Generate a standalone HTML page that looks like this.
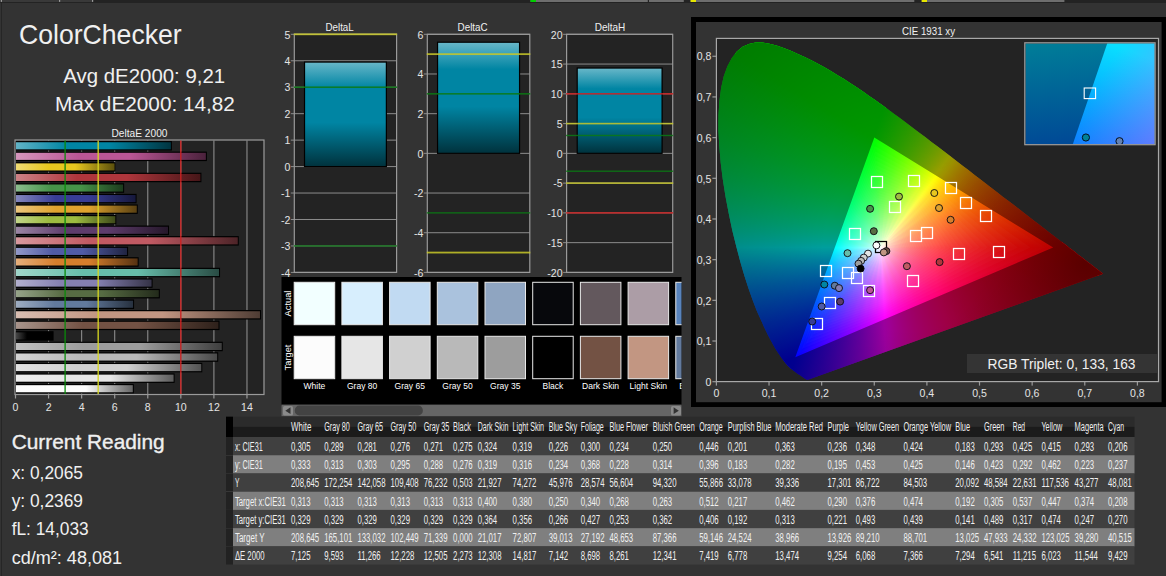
<!DOCTYPE html>
<html><head><meta charset="utf-8"><title>ColorChecker</title>
<style>
html,body{margin:0;padding:0;background:#333333;overflow:hidden}
#root{position:relative;width:1166px;height:576px;background:#333333;overflow:hidden;font-family:"Liberation Sans", sans-serif}
svg{position:absolute;left:0;top:0;font-family:"Liberation Sans", sans-serif}
#cie{position:absolute;left:717.0px;top:39.0px;width:441.0px;height:342.0px;clip-path:polygon(91.0px 340.7px,91.0px 340.7px,90.9px 340.7px,90.9px 340.7px,90.8px 340.7px,90.7px 340.7px,90.6px 340.7px,90.5px 340.8px,90.4px 340.8px,90.2px 340.7px,90.0px 340.7px,89.8px 340.7px,89.6px 340.6px,89.4px 340.5px,89.2px 340.5px,89.0px 340.3px,88.8px 340.2px,88.6px 340.1px,88.3px 339.9px,88.0px 339.7px,87.6px 339.5px,87.2px 339.2px,86.8px 338.9px,86.4px 338.6px,85.9px 338.3px,85.4px 337.9px,84.8px 337.5px,84.2px 337.1px,83.5px 336.6px,82.7px 336.1px,81.8px 335.5px,80.9px 334.9px,79.9px 334.2px,78.9px 333.5px,77.7px 332.6px,76.5px 331.7px,75.2px 330.6px,73.8px 329.4px,72.3px 328.1px,70.7px 326.5px,68.9px 324.4px,66.9px 322.1px,64.7px 319.2px,62.4px 315.8px,59.8px 312.0px,57.1px 307.4px,54.1px 302.0px,50.9px 295.9px,47.4px 288.7px,43.7px 280.6px,39.6px 271.4px,35.6px 261.1px,31.5px 249.4px,27.3px 236.6px,23.3px 222.7px,19.3px 207.6px,15.3px 191.4px,11.8px 174.8px,8.6px 157.9px,5.8px 140.6px,3.7px 123.7px,2.3px 107.3px,1.4px 91.3px,1.5px 76.3px,2.4px 62.3px,4.1px 49.1px,6.7px 37.5px,10.3px 27.5px,14.8px 19.0px,19.9px 12.4px,25.6px 7.8px,31.9px 5.0px,38.5px 3.5px,45.3px 3.5px,52.4px 4.7px,59.5px 6.6px,66.6px 8.9px,73.8px 11.8px,80.8px 14.9px,87.6px 18.0px,94.3px 21.3px,100.9px 24.7px,107.4px 28.3px,113.8px 32.0px,120.2px 35.9px,126.6px 39.8px,133.0px 43.9px,139.3px 48.1px,145.6px 52.3px,151.8px 56.7px,158.1px 61.1px,164.4px 65.5px,170.6px 70.1px,176.9px 74.7px,183.2px 79.3px,189.5px 84.0px,195.7px 88.7px,202.0px 93.4px,208.2px 98.1px,214.5px 102.9px,220.7px 107.6px,226.9px 112.3px,233.1px 117.0px,239.2px 121.8px,245.3px 126.4px,251.4px 131.1px,257.3px 135.7px,263.3px 140.3px,269.1px 144.8px,274.9px 149.2px,280.5px 153.6px,286.1px 157.9px,291.6px 162.0px,296.9px 166.1px,302.1px 170.1px,307.1px 174.0px,312.0px 177.8px,316.7px 181.4px,321.1px 184.8px,325.3px 188.1px,329.4px 191.2px,333.3px 194.2px,337.0px 197.0px,340.5px 199.8px,343.8px 202.3px,346.9px 204.6px,349.8px 206.8px,352.5px 208.9px,355.0px 210.8px,357.3px 212.6px,359.5px 214.3px,361.4px 215.9px,363.3px 217.3px,365.0px 218.6px,366.6px 219.8px,368.1px 220.9px,369.5px 222.0px,370.7px 223.0px,371.9px 223.9px,373.1px 224.8px,374.1px 225.6px,375.1px 226.4px,376.1px 227.1px,377.0px 227.8px,377.8px 228.4px,378.5px 229.0px,379.2px 229.5px,379.9px 230.0px,380.4px 230.4px,380.9px 230.8px,381.5px 231.2px,382.1px 231.7px,382.8px 232.3px,383.6px 232.9px,384.5px 233.6px,385.4px 234.3px,386.0px 234.8px)}
#cie div{position:absolute;left:0;top:0;width:100%;height:100%}
#eR{background:conic-gradient(from 0deg at 336.20px 208.46px,#00ff00 0deg,#00ff00 1.5deg,#00ff00 3deg,#00ff00 4.5deg,#00ff00 6deg,#00ff00 7.5deg,#00ff00 9deg,#00ff00 10.5deg,#00ff00 12deg,#00ff00 13.5deg,#00ff00 15deg,#00ff00 16.5deg,#00ff00 18deg,#00ff00 19.5deg,#00ff00 21deg,#00ff00 22.5deg,#00ff00 24deg,#00ff00 25.5deg,#00ff00 27deg,#00ff00 28.5deg,#00ff00 30deg,#00ff00 31.5deg,#00ff00 33deg,#00ff00 34.5deg,#00ff00 36deg,#00ff00 37.5deg,#00ff00 39deg,#00ff00 40.5deg,#00ff00 42deg,#00ff00 43.5deg,#00ff00 45deg,#00ff00 46.5deg,#00ff00 48deg,#00ff00 49.5deg,#00ff00 51deg,#00ff00 52.5deg,#00ff00 54deg,#00ff00 55.5deg,#00ff00 57deg,#00ff00 58.5deg,#00ff00 60deg,#00ff00 61.5deg,#00ff00 63deg,#00ff00 64.5deg,#00ff00 66deg,#000000 67.5deg,#000000 69deg,#000000 70.5deg,#000000 72deg,#000000 73.5deg,#000000 75deg,#000000 76.5deg,#000000 78deg,#000000 79.5deg,#000000 81deg,#000000 82.5deg,#000000 84deg,#000000 85.5deg,#000000 87deg,#000000 88.5deg,#000000 90deg,#000000 91.5deg,#000000 93deg,#000000 94.5deg,#000000 96deg,#000000 97.5deg,#000000 99deg,#000000 100.5deg,#000000 102deg,#000000 103.5deg,#000000 105deg,#000000 106.5deg,#000000 108deg,#000000 109.5deg,#000000 111deg,#000000 112.5deg,#000000 114deg,#000000 115.5deg,#000000 117deg,#000000 118.5deg,#000000 120deg,#000000 121.5deg,#0000ff 123deg,#0000ff 124.5deg,#0000ff 126deg,#0000ff 127.5deg,#0000ff 129deg,#0000ff 130.5deg,#0000ff 132deg,#0000ff 133.5deg,#0000ff 135deg,#0000ff 136.5deg,#0000ff 138deg,#0000ff 139.5deg,#0000ff 141deg,#0000ff 142.5deg,#0000ff 144deg,#0000ff 145.5deg,#0000ff 147deg,#0000ff 148.5deg,#0000ff 150deg,#0000ff 151.5deg,#0000ff 153deg,#0000ff 154.5deg,#0000ff 156deg,#0000ff 157.5deg,#0000ff 159deg,#0000ff 160.5deg,#0000ff 162deg,#0000ff 163.5deg,#0000ff 165deg,#0000ff 166.5deg,#0000ff 168deg,#0000ff 169.5deg,#0000ff 171deg,#0000ff 172.5deg,#0000ff 174deg,#0000ff 175.5deg,#0000ff 177deg,#0000ff 178.5deg,#0000ff 180deg,#0000ff 181.5deg,#0000ff 183deg,#0000ff 184.5deg,#0000ff 186deg,#0000ff 187.5deg,#0000ff 189deg,#0000ff 190.5deg,#0000ff 192deg,#0000ff 193.5deg,#0000ff 195deg,#0000ff 196.5deg,#0000ff 198deg,#0000ff 199.5deg,#0000ff 201deg,#0000ff 202.5deg,#0000ff 204deg,#0000ff 205.5deg,#0000ff 207deg,#0000ff 208.5deg,#0000ff 210deg,#0000ff 211.5deg,#0000ff 213deg,#0000ff 214.5deg,#0000ff 216deg,#0000ff 217.5deg,#0000ff 219deg,#0000ff 220.5deg,#0000ff 222deg,#0000ff 223.5deg,#0000ff 225deg,#0000ff 226.5deg,#0000ff 228deg,#0000ff 229.5deg,#0000ff 231deg,#0000ff 232.5deg,#0000ff 234deg,#0000ff 235.5deg,#0000ff 237deg,#0000ff 238.5deg,#0000ff 240deg,#0000ff 241.5deg,#0000ff 243deg,#0000ff 244.5deg,#0000ff 246deg,#0004ff 247.5deg,#0010ff 249deg,#001cff 250.5deg,#0028ff 252deg,#0035ff 253.5deg,#0042ff 255deg,#0051ff 256.5deg,#0060ff 258deg,#0070ff 259.5deg,#0081ff 261deg,#0092ff 262.5deg,#00a6ff 264deg,#00baff 265.5deg,#00d0ff 267deg,#00e8ff 268.5deg,#00fffd 270deg,#00ffe4 271.5deg,#00ffce 273deg,#00ffba 274.5deg,#00ffa8 276deg,#00ff98 277.5deg,#00ff89 279deg,#00ff7b 280.5deg,#00ff6e 282deg,#00ff62 283.5deg,#00ff57 285deg,#00ff4d 286.5deg,#00ff43 288deg,#00ff3a 289.5deg,#00ff32 291deg,#00ff2a 292.5deg,#00ff22 294deg,#00ff1b 295.5deg,#00ff14 297deg,#00ff0d 298.5deg,#00ff06 300deg,#00ff00 301.5deg,#00ff00 303deg,#00ff00 304.5deg,#00ff00 306deg,#00ff00 307.5deg,#00ff00 309deg,#00ff00 310.5deg,#00ff00 312deg,#00ff00 313.5deg,#00ff00 315deg,#00ff00 316.5deg,#00ff00 318deg,#00ff00 319.5deg,#00ff00 321deg,#00ff00 322.5deg,#00ff00 324deg,#00ff00 325.5deg,#00ff00 327deg,#00ff00 328.5deg,#00ff00 330deg,#00ff00 331.5deg,#00ff00 333deg,#00ff00 334.5deg,#00ff00 336deg,#00ff00 337.5deg,#00ff00 339deg,#00ff00 340.5deg,#00ff00 342deg,#00ff00 343.5deg,#00ff00 345deg,#00ff00 346.5deg,#00ff00 348deg,#00ff00 349.5deg,#00ff00 351deg,#00ff00 352.5deg,#00ff00 354deg,#00ff00 355.5deg,#00ff00 357deg,#00ff00 358.5deg,#00ff00 360deg);clip-path:polygon(463.0px -747.8px,-224.6px 1165.8px,-1071.6px 861.4px,-383.9px -1052.2px)}
#eG{background:conic-gradient(from 0deg at 157.27px 98.62px,#000000 0deg,#000000 1.5deg,#000000 3deg,#000000 4.5deg,#000000 6deg,#000000 7.5deg,#000000 9deg,#000000 10.5deg,#000000 12deg,#000000 13.5deg,#000000 15deg,#000000 16.5deg,#000000 18deg,#000000 19.5deg,#ff0000 21deg,#ff0000 22.5deg,#ff0000 24deg,#ff0000 25.5deg,#ff0000 27deg,#ff0000 28.5deg,#ff0000 30deg,#ff0000 31.5deg,#ff0000 33deg,#ff0000 34.5deg,#ff0000 36deg,#ff0000 37.5deg,#ff0000 39deg,#ff0000 40.5deg,#ff0000 42deg,#ff0000 43.5deg,#ff0000 45deg,#ff0000 46.5deg,#ff0000 48deg,#ff0000 49.5deg,#ff0000 51deg,#ff0000 52.5deg,#ff0000 54deg,#ff0000 55.5deg,#ff0000 57deg,#ff0000 58.5deg,#ff0000 60deg,#ff0000 61.5deg,#ff0000 63deg,#ff0000 64.5deg,#ff0000 66deg,#ff0000 67.5deg,#ff0000 69deg,#ff0000 70.5deg,#ff0000 72deg,#ff0000 73.5deg,#ff0000 75deg,#ff0000 76.5deg,#ff0000 78deg,#ff0000 79.5deg,#ff0000 81deg,#ff0000 82.5deg,#ff0000 84deg,#ff0000 85.5deg,#ff0000 87deg,#ff0000 88.5deg,#ff0000 90deg,#ff0000 91.5deg,#ff0000 93deg,#ff0000 94.5deg,#ff0000 96deg,#ff0000 97.5deg,#ff0000 99deg,#ff0000 100.5deg,#ff0000 102deg,#ff0000 103.5deg,#ff0000 105deg,#ff0000 106.5deg,#ff0000 108deg,#ff0000 109.5deg,#ff0000 111deg,#ff0000 112.5deg,#ff0000 114deg,#ff0000 115.5deg,#ff0000 117deg,#ff0000 118.5deg,#ff0000 120deg,#ff0000 121.5deg,#ff0003 123deg,#ff0007 124.5deg,#ff000a 126deg,#ff000d 127.5deg,#ff0011 129deg,#ff0014 130.5deg,#ff0018 132deg,#ff001c 133.5deg,#ff0020 135deg,#ff0024 136.5deg,#ff0028 138deg,#ff002c 139.5deg,#ff0030 141deg,#ff0034 142.5deg,#ff0039 144deg,#ff003d 145.5deg,#ff0042 147deg,#ff0047 148.5deg,#ff004d 150deg,#ff0052 151.5deg,#ff0058 153deg,#ff005e 154.5deg,#ff0065 156deg,#ff006b 157.5deg,#ff0072 159deg,#ff007a 160.5deg,#ff0082 162deg,#ff008b 163.5deg,#ff0094 165deg,#ff009e 166.5deg,#ff00a9 168deg,#ff00b5 169.5deg,#ff00c2 171deg,#ff00d0 172.5deg,#ff00e0 174deg,#ff00f2 175.5deg,#f900ff 177deg,#e500ff 178.5deg,#d200ff 180deg,#c000ff 181.5deg,#ae00ff 183deg,#9c00ff 184.5deg,#8c00ff 186deg,#7b00ff 187.5deg,#6b00ff 189deg,#5b00ff 190.5deg,#4c00ff 192deg,#3d00ff 193.5deg,#2e00ff 195deg,#1f00ff 196.5deg,#1100ff 198deg,#0300ff 199.5deg,#0000ff 201deg,#0000ff 202.5deg,#0000ff 204deg,#0000ff 205.5deg,#0000ff 207deg,#0000ff 208.5deg,#0000ff 210deg,#0000ff 211.5deg,#0000ff 213deg,#0000ff 214.5deg,#0000ff 216deg,#0000ff 217.5deg,#0000ff 219deg,#0000ff 220.5deg,#0000ff 222deg,#0000ff 223.5deg,#0000ff 225deg,#0000ff 226.5deg,#0000ff 228deg,#0000ff 229.5deg,#0000ff 231deg,#0000ff 232.5deg,#0000ff 234deg,#0000ff 235.5deg,#0000ff 237deg,#0000ff 238.5deg,#0000ff 240deg,#0000ff 241.5deg,#0000ff 243deg,#0000ff 244.5deg,#0000ff 246deg,#0000ff 247.5deg,#0000ff 249deg,#0000ff 250.5deg,#0000ff 252deg,#0000ff 253.5deg,#0000ff 255deg,#0000ff 256.5deg,#0000ff 258deg,#0000ff 259.5deg,#0000ff 261deg,#0000ff 262.5deg,#0000ff 264deg,#0000ff 265.5deg,#0000ff 267deg,#0000ff 268.5deg,#0000ff 270deg,#0000ff 271.5deg,#0000ff 273deg,#0000ff 274.5deg,#0000ff 276deg,#0000ff 277.5deg,#0000ff 279deg,#0000ff 280.5deg,#0000ff 282deg,#0000ff 283.5deg,#0000ff 285deg,#0000ff 286.5deg,#0000ff 288deg,#0000ff 289.5deg,#0000ff 291deg,#0000ff 292.5deg,#0000ff 294deg,#0000ff 295.5deg,#0000ff 297deg,#0000ff 298.5deg,#0000ff 300deg,#0000ff 301.5deg,#000000 303deg,#000000 304.5deg,#000000 306deg,#000000 307.5deg,#000000 309deg,#000000 310.5deg,#000000 312deg,#000000 313.5deg,#000000 315deg,#000000 316.5deg,#000000 318deg,#000000 319.5deg,#000000 321deg,#000000 322.5deg,#000000 324deg,#000000 325.5deg,#000000 327deg,#000000 328.5deg,#000000 330deg,#000000 331.5deg,#000000 333deg,#000000 334.5deg,#000000 336deg,#000000 337.5deg,#000000 339deg,#000000 340.5deg,#000000 342deg,#000000 343.5deg,#000000 345deg,#000000 346.5deg,#000000 348deg,#000000 349.5deg,#000000 351deg,#000000 352.5deg,#000000 354deg,#000000 355.5deg,#000000 357deg,#000000 358.5deg,#000000 360deg);clip-path:polygon(1163.6px -145.6px,-750.3px 669.6px,-397.6px 1497.6px,1516.3px 682.4px)}
#eB{background:conic-gradient(from 0deg at 78.34px 318.29px,#00ff00 0deg,#00ff00 1.5deg,#00ff00 3deg,#00ff00 4.5deg,#00ff00 6deg,#00ff00 7.5deg,#00ff00 9deg,#00ff00 10.5deg,#00ff00 12deg,#00ff00 13.5deg,#00ff00 15deg,#00ff00 16.5deg,#00ff00 18deg,#00ff00 19.5deg,#0cff00 21deg,#1bff00 22.5deg,#2bff00 24deg,#3bff00 25.5deg,#4dff00 27deg,#60ff00 28.5deg,#74ff00 30deg,#8aff00 31.5deg,#a1ff00 33deg,#baff00 34.5deg,#d6ff00 36deg,#f4ff00 37.5deg,#ffeb00 39deg,#ffd000 40.5deg,#ffb800 42deg,#ffa400 43.5deg,#ff9100 45deg,#ff8000 46.5deg,#ff7200 48deg,#ff6400 49.5deg,#ff5800 51deg,#ff4c00 52.5deg,#ff4200 54deg,#ff3800 55.5deg,#ff2f00 57deg,#ff2700 58.5deg,#ff1f00 60deg,#ff1800 61.5deg,#ff1100 63deg,#ff0a00 64.5deg,#ff0400 66deg,#ff0000 67.5deg,#ff0000 69deg,#ff0000 70.5deg,#ff0000 72deg,#ff0000 73.5deg,#ff0000 75deg,#ff0000 76.5deg,#ff0000 78deg,#ff0000 79.5deg,#ff0000 81deg,#ff0000 82.5deg,#ff0000 84deg,#ff0000 85.5deg,#ff0000 87deg,#ff0000 88.5deg,#ff0000 90deg,#ff0000 91.5deg,#ff0000 93deg,#ff0000 94.5deg,#ff0000 96deg,#ff0000 97.5deg,#ff0000 99deg,#ff0000 100.5deg,#ff0000 102deg,#ff0000 103.5deg,#ff0000 105deg,#ff0000 106.5deg,#ff0000 108deg,#ff0000 109.5deg,#ff0000 111deg,#ff0000 112.5deg,#ff0000 114deg,#ff0000 115.5deg,#ff0000 117deg,#ff0000 118.5deg,#ff0000 120deg,#ff0000 121.5deg,#ff0000 123deg,#ff0000 124.5deg,#ff0000 126deg,#ff0000 127.5deg,#ff0000 129deg,#ff0000 130.5deg,#ff0000 132deg,#ff0000 133.5deg,#ff0000 135deg,#ff0000 136.5deg,#ff0000 138deg,#ff0000 139.5deg,#ff0000 141deg,#ff0000 142.5deg,#ff0000 144deg,#ff0000 145.5deg,#ff0000 147deg,#ff0000 148.5deg,#ff0000 150deg,#ff0000 151.5deg,#ff0000 153deg,#ff0000 154.5deg,#ff0000 156deg,#ff0000 157.5deg,#ff0000 159deg,#ff0000 160.5deg,#ff0000 162deg,#ff0000 163.5deg,#ff0000 165deg,#ff0000 166.5deg,#ff0000 168deg,#ff0000 169.5deg,#ff0000 171deg,#ff0000 172.5deg,#ff0000 174deg,#ff0000 175.5deg,#ff0000 177deg,#ff0000 178.5deg,#ff0000 180deg,#ff0000 181.5deg,#ff0000 183deg,#ff0000 184.5deg,#ff0000 186deg,#ff0000 187.5deg,#ff0000 189deg,#ff0000 190.5deg,#ff0000 192deg,#ff0000 193.5deg,#ff0000 195deg,#ff0000 196.5deg,#ff0000 198deg,#ff0000 199.5deg,#000000 201deg,#000000 202.5deg,#000000 204deg,#000000 205.5deg,#000000 207deg,#000000 208.5deg,#000000 210deg,#000000 211.5deg,#000000 213deg,#000000 214.5deg,#000000 216deg,#000000 217.5deg,#000000 219deg,#000000 220.5deg,#000000 222deg,#000000 223.5deg,#000000 225deg,#000000 226.5deg,#000000 228deg,#000000 229.5deg,#000000 231deg,#000000 232.5deg,#000000 234deg,#000000 235.5deg,#000000 237deg,#000000 238.5deg,#000000 240deg,#000000 241.5deg,#000000 243deg,#000000 244.5deg,#000000 246deg,#00ff00 247.5deg,#00ff00 249deg,#00ff00 250.5deg,#00ff00 252deg,#00ff00 253.5deg,#00ff00 255deg,#00ff00 256.5deg,#00ff00 258deg,#00ff00 259.5deg,#00ff00 261deg,#00ff00 262.5deg,#00ff00 264deg,#00ff00 265.5deg,#00ff00 267deg,#00ff00 268.5deg,#00ff00 270deg,#00ff00 271.5deg,#00ff00 273deg,#00ff00 274.5deg,#00ff00 276deg,#00ff00 277.5deg,#00ff00 279deg,#00ff00 280.5deg,#00ff00 282deg,#00ff00 283.5deg,#00ff00 285deg,#00ff00 286.5deg,#00ff00 288deg,#00ff00 289.5deg,#00ff00 291deg,#00ff00 292.5deg,#00ff00 294deg,#00ff00 295.5deg,#00ff00 297deg,#00ff00 298.5deg,#00ff00 300deg,#00ff00 301.5deg,#00ff00 303deg,#00ff00 304.5deg,#00ff00 306deg,#00ff00 307.5deg,#00ff00 309deg,#00ff00 310.5deg,#00ff00 312deg,#00ff00 313.5deg,#00ff00 315deg,#00ff00 316.5deg,#00ff00 318deg,#00ff00 319.5deg,#00ff00 321deg,#00ff00 322.5deg,#00ff00 324deg,#00ff00 325.5deg,#00ff00 327deg,#00ff00 328.5deg,#00ff00 330deg,#00ff00 331.5deg,#00ff00 333deg,#00ff00 334.5deg,#00ff00 336deg,#00ff00 337.5deg,#00ff00 339deg,#00ff00 340.5deg,#00ff00 342deg,#00ff00 343.5deg,#00ff00 345deg,#00ff00 346.5deg,#00ff00 348deg,#00ff00 349.5deg,#00ff00 351deg,#00ff00 352.5deg,#00ff00 354deg,#00ff00 355.5deg,#00ff00 357deg,#00ff00 358.5deg,#00ff00 360deg);clip-path:polygon(1102.4px 680.6px,-610.5px -370.9px,-139.7px -1138.0px,1573.3px -86.4px)}
#tri{background:conic-gradient(from 0deg at 163.96px 208.86px,#17ff00 0deg,#20ff00 1.5deg,#29ff00 3deg,#32ff00 4.5deg,#3aff00 6deg,#42ff00 7.5deg,#4bff00 9deg,#53ff00 10.5deg,#5bff00 12deg,#64ff00 13.5deg,#6cff00 15deg,#75ff00 16.5deg,#7dff00 18deg,#86ff00 19.5deg,#8eff00 21deg,#97ff00 22.5deg,#a0ff00 24deg,#a9ff00 25.5deg,#b3ff00 27deg,#bcff00 28.5deg,#c6ff00 30deg,#d0ff00 31.5deg,#daff00 33deg,#e5ff00 34.5deg,#f0ff00 36deg,#fbff00 37.5deg,#fff800 39deg,#ffed00 40.5deg,#ffe200 42deg,#ffd800 43.5deg,#ffcf00 45deg,#ffc600 46.5deg,#ffbd00 48deg,#ffb500 49.5deg,#ffac00 51deg,#ffa500 52.5deg,#ff9d00 54deg,#ff9500 55.5deg,#ff8e00 57deg,#ff8700 58.5deg,#ff8000 60deg,#ff7900 61.5deg,#ff7300 63deg,#ff6c00 64.5deg,#ff6600 66deg,#ff5f00 67.5deg,#ff5900 69deg,#ff5300 70.5deg,#ff4d00 72deg,#ff4700 73.5deg,#ff4100 75deg,#ff3a00 76.5deg,#ff3400 78deg,#ff2e00 79.5deg,#ff2800 81deg,#ff2200 82.5deg,#ff1b00 84deg,#ff1500 85.5deg,#ff0e00 87deg,#ff0700 88.5deg,#ff0001 90deg,#ff0008 91.5deg,#ff000f 93deg,#ff0015 94.5deg,#ff001b 96deg,#ff0020 97.5deg,#ff0025 99deg,#ff002a 100.5deg,#ff002f 102deg,#ff0033 103.5deg,#ff0038 105deg,#ff003c 106.5deg,#ff0040 108deg,#ff0044 109.5deg,#ff0048 111deg,#ff004c 112.5deg,#ff0050 114deg,#ff0054 115.5deg,#ff0058 117deg,#ff005b 118.5deg,#ff005f 120deg,#ff0062 121.5deg,#ff0066 123deg,#ff0069 124.5deg,#ff006d 126deg,#ff0070 127.5deg,#ff0074 129deg,#ff0077 130.5deg,#ff007b 132deg,#ff007e 133.5deg,#ff0081 135deg,#ff0085 136.5deg,#ff0088 138deg,#ff008c 139.5deg,#ff008f 141deg,#ff0093 142.5deg,#ff0096 144deg,#ff009a 145.5deg,#ff009e 147deg,#ff00a2 148.5deg,#ff00a5 150deg,#ff00a9 151.5deg,#ff00ad 153deg,#ff00b1 154.5deg,#ff00b5 156deg,#ff00ba 157.5deg,#ff00be 159deg,#ff00c3 160.5deg,#ff00c7 162deg,#ff00cc 163.5deg,#ff00d1 165deg,#ff00d6 166.5deg,#ff00db 168deg,#ff00e1 169.5deg,#ff00e7 171deg,#ff00ed 172.5deg,#ff00f3 174deg,#ff00fa 175.5deg,#fd00ff 177deg,#f500ff 178.5deg,#ee00ff 180deg,#e700ff 181.5deg,#e000ff 183deg,#d800ff 184.5deg,#d100ff 186deg,#ca00ff 187.5deg,#c200ff 189deg,#ba00ff 190.5deg,#b300ff 192deg,#ab00ff 193.5deg,#a300ff 195deg,#9b00ff 196.5deg,#9200ff 198deg,#8a00ff 199.5deg,#8100ff 201deg,#7800ff 202.5deg,#6f00ff 204deg,#6500ff 205.5deg,#5c00ff 207deg,#5100ff 208.5deg,#4700ff 210deg,#3b00ff 211.5deg,#3000ff 213deg,#2300ff 214.5deg,#1600ff 216deg,#0700ff 217.5deg,#000bff 219deg,#0019ff 220.5deg,#0026ff 222deg,#0032ff 223.5deg,#003cff 225deg,#0047ff 226.5deg,#0050ff 228deg,#0059ff 229.5deg,#0062ff 231deg,#006aff 232.5deg,#0072ff 234deg,#007aff 235.5deg,#0081ff 237deg,#0088ff 238.5deg,#008fff 240deg,#0096ff 241.5deg,#009cff 243deg,#00a3ff 244.5deg,#00a9ff 246deg,#00afff 247.5deg,#00b5ff 249deg,#00bbff 250.5deg,#00c0ff 252deg,#00c6ff 253.5deg,#00cbff 255deg,#00d1ff 256.5deg,#00d6ff 258deg,#00dbff 259.5deg,#00e1ff 261deg,#00e6ff 262.5deg,#00ebff 264deg,#00f0ff 265.5deg,#00f5ff 267deg,#00faff 268.5deg,#00ffff 270deg,#00fffa 271.5deg,#00fff5 273deg,#00fff0 274.5deg,#00ffec 276deg,#00ffe7 277.5deg,#00ffe3 279deg,#00ffdf 280.5deg,#00ffdb 282deg,#00ffd7 283.5deg,#00ffd3 285deg,#00ffcf 286.5deg,#00ffcb 288deg,#00ffc8 289.5deg,#00ffc4 291deg,#00ffc1 292.5deg,#00ffbd 294deg,#00ffba 295.5deg,#00ffb6 297deg,#00ffb3 298.5deg,#00ffb0 300deg,#00ffac 301.5deg,#00ffa9 303deg,#00ffa6 304.5deg,#00ffa2 306deg,#00ff9f 307.5deg,#00ff9c 309deg,#00ff98 310.5deg,#00ff95 312deg,#00ff92 313.5deg,#00ff8e 315deg,#00ff8b 316.5deg,#00ff87 318deg,#00ff84 319.5deg,#00ff80 321deg,#00ff7d 322.5deg,#00ff79 324deg,#00ff75 325.5deg,#00ff71 327deg,#00ff6e 328.5deg,#00ff6a 330deg,#00ff66 331.5deg,#00ff61 333deg,#00ff5d 334.5deg,#00ff59 336deg,#00ff54 337.5deg,#00ff4f 339deg,#00ff4a 340.5deg,#00ff45 342deg,#00ff40 343.5deg,#00ff3a 345deg,#00ff34 346.5deg,#00ff2e 348deg,#00ff27 349.5deg,#00ff20 351deg,#00ff19 352.5deg,#00ff11 354deg,#00ff08 355.5deg,#04ff00 357deg,#0eff00 358.5deg,#17ff00 360deg);clip-path:polygon(336.2px 208.5px,157.3px 98.6px,78.3px 318.3px)}

</style></head><body><div id="root">
<svg width="1166" height="576" viewBox="0 0 1166 576">
<defs><linearGradient id="bg1" x1="0" y1="0" x2="1" y2="0"><stop offset="0" stop-color="#61b3c6"/><stop offset="0.33" stop-color="#0085a3"/><stop offset="0.6" stop-color="#0085a3"/><stop offset="1" stop-color="#003541"/></linearGradient><linearGradient id="bg2" x1="0" y1="0" x2="1" y2="0"><stop offset="0" stop-color="#d596bd"/><stop offset="0.33" stop-color="#bb5695"/><stop offset="0.6" stop-color="#bb5695"/><stop offset="1" stop-color="#4b223c"/></linearGradient><linearGradient id="bg3" x1="0" y1="0" x2="1" y2="0"><stop offset="0" stop-color="#f0dc74"/><stop offset="0.33" stop-color="#e7c71f"/><stop offset="0.6" stop-color="#e7c71f"/><stop offset="1" stop-color="#5c500c"/></linearGradient><linearGradient id="bg4" x1="0" y1="0" x2="1" y2="0"><stop offset="0" stop-color="#cd8286"/><stop offset="0.33" stop-color="#af363c"/><stop offset="0.6" stop-color="#af363c"/><stop offset="1" stop-color="#461618"/></linearGradient><linearGradient id="bg5" x1="0" y1="0" x2="1" y2="0"><stop offset="0" stop-color="#8cbd8e"/><stop offset="0.33" stop-color="#469449"/><stop offset="0.6" stop-color="#469449"/><stop offset="1" stop-color="#1c3b1d"/></linearGradient><linearGradient id="bg6" x1="0" y1="0" x2="1" y2="0"><stop offset="0" stop-color="#8487be"/><stop offset="0.33" stop-color="#383d96"/><stop offset="0.6" stop-color="#383d96"/><stop offset="1" stop-color="#16183c"/></linearGradient><linearGradient id="bg7" x1="0" y1="0" x2="1" y2="0"><stop offset="0" stop-color="#ecc67d"/><stop offset="0.33" stop-color="#e0a32e"/><stop offset="0.6" stop-color="#e0a32e"/><stop offset="1" stop-color="#5a4112"/></linearGradient><linearGradient id="bg8" x1="0" y1="0" x2="1" y2="0"><stop offset="0" stop-color="#c2d589"/><stop offset="0.33" stop-color="#9dbc40"/><stop offset="0.6" stop-color="#9dbc40"/><stop offset="1" stop-color="#3f4b1a"/></linearGradient><linearGradient id="bg9" x1="0" y1="0" x2="1" y2="0"><stop offset="0" stop-color="#9b86a4"/><stop offset="0.33" stop-color="#5e3c6c"/><stop offset="0.6" stop-color="#5e3c6c"/><stop offset="1" stop-color="#26182b"/></linearGradient><linearGradient id="bg10" x1="0" y1="0" x2="1" y2="0"><stop offset="0" stop-color="#d9999e"/><stop offset="0.33" stop-color="#c15a63"/><stop offset="0.6" stop-color="#c15a63"/><stop offset="1" stop-color="#4d2428"/></linearGradient><linearGradient id="bg11" x1="0" y1="0" x2="1" y2="0"><stop offset="0" stop-color="#9299c8"/><stop offset="0.33" stop-color="#505ba6"/><stop offset="0.6" stop-color="#505ba6"/><stop offset="1" stop-color="#202442"/></linearGradient><linearGradient id="bg12" x1="0" y1="0" x2="1" y2="0"><stop offset="0" stop-color="#e6af7c"/><stop offset="0.33" stop-color="#d67e2c"/><stop offset="0.6" stop-color="#d67e2c"/><stop offset="1" stop-color="#563212"/></linearGradient><linearGradient id="bg13" x1="0" y1="0" x2="1" y2="0"><stop offset="0" stop-color="#a1d6ca"/><stop offset="0.33" stop-color="#67bdaa"/><stop offset="0.6" stop-color="#67bdaa"/><stop offset="1" stop-color="#294c44"/></linearGradient><linearGradient id="bg14" x1="0" y1="0" x2="1" y2="0"><stop offset="0" stop-color="#b3b0cf"/><stop offset="0.33" stop-color="#8580b1"/><stop offset="0.6" stop-color="#8580b1"/><stop offset="1" stop-color="#353347"/></linearGradient><linearGradient id="bg15" x1="0" y1="0" x2="1" y2="0"><stop offset="0" stop-color="#97a48a"/><stop offset="0.33" stop-color="#576c43"/><stop offset="0.6" stop-color="#576c43"/><stop offset="1" stop-color="#232b1b"/></linearGradient><linearGradient id="bg16" x1="0" y1="0" x2="1" y2="0"><stop offset="0" stop-color="#9eadc2"/><stop offset="0.33" stop-color="#627a9d"/><stop offset="0.6" stop-color="#627a9d"/><stop offset="1" stop-color="#27313f"/></linearGradient><linearGradient id="bg17" x1="0" y1="0" x2="1" y2="0"><stop offset="0" stop-color="#d9beb2"/><stop offset="0.33" stop-color="#c29682"/><stop offset="0.6" stop-color="#c29682"/><stop offset="1" stop-color="#4e3c34"/></linearGradient><linearGradient id="bg18" x1="0" y1="0" x2="1" y2="0"><stop offset="0" stop-color="#a8948b"/><stop offset="0.33" stop-color="#735244"/><stop offset="0.6" stop-color="#735244"/><stop offset="1" stop-color="#2e211b"/></linearGradient><linearGradient id="bg19" x1="0" y1="0" x2="1" y2="0"><stop offset="0" stop-color="#464646"/><stop offset="0.3" stop-color="#000000"/><stop offset="1" stop-color="#000000"/></linearGradient><linearGradient id="bg20" x1="0" y1="0" x2="1" y2="0"><stop offset="0" stop-color="#c2c2c2"/><stop offset="0.33" stop-color="#9d9d9d"/><stop offset="0.6" stop-color="#9d9d9d"/><stop offset="1" stop-color="#3f3f3f"/></linearGradient><linearGradient id="bg21" x1="0" y1="0" x2="1" y2="0"><stop offset="0" stop-color="#d4d4d4"/><stop offset="0.33" stop-color="#b9b9b9"/><stop offset="0.6" stop-color="#b9b9b9"/><stop offset="1" stop-color="#4a4a4a"/></linearGradient><linearGradient id="bg22" x1="0" y1="0" x2="1" y2="0"><stop offset="0" stop-color="#e2e2e2"/><stop offset="0.33" stop-color="#d0d0d0"/><stop offset="0.6" stop-color="#d0d0d0"/><stop offset="1" stop-color="#535353"/></linearGradient><linearGradient id="bg23" x1="0" y1="0" x2="1" y2="0"><stop offset="0" stop-color="#f0f0f0"/><stop offset="0.33" stop-color="#e6e6e6"/><stop offset="0.6" stop-color="#e6e6e6"/><stop offset="1" stop-color="#5c5c5c"/></linearGradient><linearGradient id="bg24" x1="0" y1="0" x2="1" y2="0"><stop offset="0" stop-color="#fdfdfd"/><stop offset="0.33" stop-color="#fcfcfc"/><stop offset="0.6" stop-color="#fcfcfc"/><stop offset="1" stop-color="#656565"/></linearGradient><linearGradient id="vg" x1="0" y1="0" x2="0" y2="1"><stop offset="0" stop-color="#66b6c8"/><stop offset="0.24" stop-color="#0085a3"/><stop offset="0.58" stop-color="#0085a3"/><stop offset="1" stop-color="#00333e"/></linearGradient></defs>
<rect x="0" y="0" width="1166" height="3" fill="#232323"/>
<rect x="0" y="0" width="93" height="2" fill="#393939"/>
<rect x="1" y="3" width="1" height="573" fill="#262626"/>
<rect x="530.5" y="0" width="117.3" height="2" fill="#6e6e6e"/>
<rect x="649" y="0" width="34.8" height="2" fill="#6e6e6e"/>
<rect x="690.6" y="0" width="223.7" height="2" fill="#6e6e6e"/>
<rect x="921.7" y="0" width="142.7" height="2" fill="#6e6e6e"/>
<rect x="530.5" y="0" width="5.5" height="2" fill="#00d000"/>
<rect x="690.6" y="0" width="5.4" height="2" fill="#e6e600"/>
<rect x="921.7" y="0" width="5.3" height="2" fill="#e6e600"/>
<rect x="0.8" y="0" width="1.2" height="1.9" fill="#9a9a9a"/>
<rect x="59" y="0" width="1.2" height="1.9" fill="#9a9a9a"/>
<rect x="92" y="0" width="1.2" height="1.9" fill="#9a9a9a"/>
<text x="19.00" y="43.80" font-size="27.5" fill="#f0f0f0" text-anchor="start" font-weight="normal" textLength="162.7" lengthAdjust="spacingAndGlyphs">ColorChecker</text>
<text x="63.20" y="82.90" font-size="19.5" fill="#f0f0f0" text-anchor="start" font-weight="normal" textLength="162" lengthAdjust="spacingAndGlyphs">Avg dE2000: 9,21</text>
<text x="54.90" y="111.10" font-size="19.5" fill="#f0f0f0" text-anchor="start" font-weight="normal" textLength="180" lengthAdjust="spacingAndGlyphs">Max dE2000: 14,82</text>
<text x="139.50" y="137.00" font-size="10.5" fill="#f0f0f0" text-anchor="middle" font-weight="normal" textLength="56" lengthAdjust="spacingAndGlyphs">DeltaE 2000</text>
<rect x="15.5" y="140.5" width="248.0" height="253.5" fill="#232323"/>
<rect x="48.02" y="140.5" width="1.1" height="253.5" fill="#8c8c8c"/>
<rect x="81.08" y="140.5" width="1.1" height="253.5" fill="#8c8c8c"/>
<rect x="114.15" y="140.5" width="1.1" height="253.5" fill="#8c8c8c"/>
<rect x="147.22" y="140.5" width="1.1" height="253.5" fill="#8c8c8c"/>
<rect x="180.28" y="140.5" width="1.1" height="253.5" fill="#8c8c8c"/>
<rect x="213.35" y="140.5" width="1.1" height="253.5" fill="#8c8c8c"/>
<rect x="246.42" y="140.5" width="1.1" height="253.5" fill="#8c8c8c"/>
<rect x="15.00" y="141.03" width="156.89" height="9.5" fill="#000"/>
<rect x="16.00" y="142.23" width="154.89" height="7.1" fill="url(#bg1)"/>
<rect x="15.00" y="151.59" width="191.86" height="9.5" fill="#000"/>
<rect x="16.00" y="152.79" width="189.86" height="7.1" fill="url(#bg2)"/>
<rect x="15.00" y="162.16" width="100.58" height="9.5" fill="#000"/>
<rect x="16.00" y="163.36" width="98.58" height="7.1" fill="url(#bg3)"/>
<rect x="15.00" y="172.72" width="186.42" height="9.5" fill="#000"/>
<rect x="16.00" y="173.92" width="184.42" height="7.1" fill="url(#bg4)"/>
<rect x="15.00" y="183.28" width="109.14" height="9.5" fill="#000"/>
<rect x="16.00" y="184.48" width="107.14" height="7.1" fill="url(#bg5)"/>
<rect x="15.00" y="193.84" width="121.59" height="9.5" fill="#000"/>
<rect x="16.00" y="195.04" width="119.59" height="7.1" fill="url(#bg6)"/>
<rect x="15.00" y="204.41" width="122.78" height="9.5" fill="#000"/>
<rect x="16.00" y="205.61" width="120.78" height="7.1" fill="url(#bg7)"/>
<rect x="15.00" y="214.97" width="101.32" height="9.5" fill="#000"/>
<rect x="16.00" y="216.17" width="99.32" height="7.1" fill="url(#bg8)"/>
<rect x="15.00" y="225.53" width="154.00" height="9.5" fill="#000"/>
<rect x="16.00" y="226.73" width="152.00" height="7.1" fill="url(#bg9)"/>
<rect x="15.00" y="236.09" width="223.77" height="9.5" fill="#000"/>
<rect x="16.00" y="237.29" width="221.77" height="7.1" fill="url(#bg10)"/>
<rect x="15.00" y="246.66" width="113.06" height="9.5" fill="#000"/>
<rect x="16.00" y="247.86" width="111.06" height="7.1" fill="url(#bg11)"/>
<rect x="15.00" y="257.22" width="123.66" height="9.5" fill="#000"/>
<rect x="16.00" y="258.42" width="121.66" height="7.1" fill="url(#bg12)"/>
<rect x="15.00" y="267.78" width="205.04" height="9.5" fill="#000"/>
<rect x="16.00" y="268.98" width="203.04" height="7.1" fill="url(#bg13)"/>
<rect x="15.00" y="278.34" width="137.58" height="9.5" fill="#000"/>
<rect x="16.00" y="279.54" width="135.58" height="7.1" fill="url(#bg14)"/>
<rect x="15.00" y="288.91" width="144.81" height="9.5" fill="#000"/>
<rect x="16.00" y="290.11" width="142.81" height="7.1" fill="url(#bg15)"/>
<rect x="15.00" y="299.47" width="119.08" height="9.5" fill="#000"/>
<rect x="16.00" y="300.67" width="117.08" height="7.1" fill="url(#bg16)"/>
<rect x="15.00" y="310.03" width="245.97" height="9.5" fill="#000"/>
<rect x="16.00" y="311.23" width="243.97" height="7.1" fill="url(#bg17)"/>
<rect x="15.00" y="320.59" width="204.49" height="9.5" fill="#000"/>
<rect x="16.00" y="321.79" width="202.49" height="7.1" fill="url(#bg18)"/>
<rect x="15.00" y="331.16" width="38.58" height="9.5" fill="#000"/>
<rect x="16.00" y="332.36" width="36.58" height="7.1" fill="url(#bg19)"/>
<rect x="15.00" y="341.72" width="207.75" height="9.5" fill="#000"/>
<rect x="16.00" y="342.92" width="205.75" height="7.1" fill="url(#bg20)"/>
<rect x="15.00" y="352.28" width="203.17" height="9.5" fill="#000"/>
<rect x="16.00" y="353.48" width="201.17" height="7.1" fill="url(#bg21)"/>
<rect x="15.00" y="362.84" width="187.26" height="9.5" fill="#000"/>
<rect x="16.00" y="364.04" width="185.26" height="7.1" fill="url(#bg22)"/>
<rect x="15.00" y="373.41" width="159.60" height="9.5" fill="#000"/>
<rect x="16.00" y="374.61" width="157.60" height="7.1" fill="url(#bg23)"/>
<rect x="15.00" y="383.97" width="118.80" height="9.5" fill="#000"/>
<rect x="16.00" y="385.17" width="116.80" height="7.1" fill="url(#bg24)"/>
<rect x="15.0" y="140.0" width="249.0" height="254.5" fill="none" stroke="#9a9a9a" stroke-width="1.2"/>
<rect x="64.45" y="140.5" width="1.3" height="253.5" fill="#0a8a0a"/>
<rect x="97.52" y="140.5" width="1.3" height="253.5" fill="#d8d820"/>
<rect x="180.18" y="140.5" width="1.3" height="253.5" fill="#d02020"/>
<rect x="14.90" y="394.0" width="1.2" height="4.5" fill="#9a9a9a"/>
<text transform="translate(15.50 410.50) scale(0.920 1)" font-size="11.5" fill="#e4e4e4" text-anchor="middle" font-weight="normal">0</text>
<rect x="47.97" y="394.0" width="1.2" height="4.5" fill="#9a9a9a"/>
<text transform="translate(48.57 410.50) scale(0.920 1)" font-size="11.5" fill="#e4e4e4" text-anchor="middle" font-weight="normal">2</text>
<rect x="81.03" y="394.0" width="1.2" height="4.5" fill="#9a9a9a"/>
<text transform="translate(81.63 410.50) scale(0.920 1)" font-size="11.5" fill="#e4e4e4" text-anchor="middle" font-weight="normal">4</text>
<rect x="114.10" y="394.0" width="1.2" height="4.5" fill="#9a9a9a"/>
<text transform="translate(114.70 410.50) scale(0.920 1)" font-size="11.5" fill="#e4e4e4" text-anchor="middle" font-weight="normal">6</text>
<rect x="147.17" y="394.0" width="1.2" height="4.5" fill="#9a9a9a"/>
<text transform="translate(147.77 410.50) scale(0.920 1)" font-size="11.5" fill="#e4e4e4" text-anchor="middle" font-weight="normal">8</text>
<rect x="180.23" y="394.0" width="1.2" height="4.5" fill="#9a9a9a"/>
<text transform="translate(180.83 410.50) scale(0.920 1)" font-size="11.5" fill="#e4e4e4" text-anchor="middle" font-weight="normal">10</text>
<rect x="213.30" y="394.0" width="1.2" height="4.5" fill="#9a9a9a"/>
<text transform="translate(213.90 410.50) scale(0.920 1)" font-size="11.5" fill="#e4e4e4" text-anchor="middle" font-weight="normal">12</text>
<rect x="246.37" y="394.0" width="1.2" height="4.5" fill="#9a9a9a"/>
<text transform="translate(246.97 410.50) scale(0.920 1)" font-size="11.5" fill="#e4e4e4" text-anchor="middle" font-weight="normal">14</text>
<rect x="294.3" y="34.3" width="102.30000000000001" height="238.09999999999997" fill="#232323"/>
<rect x="290.8" y="271.90" width="105.80000000000001" height="1.0" fill="#8c8c8c"/>
<text transform="translate(290.30 276.60) scale(0.920 1)" font-size="11.5" fill="#e4e4e4" text-anchor="end" font-weight="normal">-4</text>
<rect x="290.8" y="245.44" width="105.80000000000001" height="1.0" fill="#8c8c8c"/>
<text transform="translate(290.30 250.14) scale(0.920 1)" font-size="11.5" fill="#e4e4e4" text-anchor="end" font-weight="normal">-3</text>
<rect x="290.8" y="218.99" width="105.80000000000001" height="1.0" fill="#8c8c8c"/>
<text transform="translate(290.30 223.69) scale(0.920 1)" font-size="11.5" fill="#e4e4e4" text-anchor="end" font-weight="normal">-2</text>
<rect x="290.8" y="192.53" width="105.80000000000001" height="1.0" fill="#8c8c8c"/>
<text transform="translate(290.30 197.23) scale(0.920 1)" font-size="11.5" fill="#e4e4e4" text-anchor="end" font-weight="normal">-1</text>
<rect x="290.8" y="166.08" width="105.80000000000001" height="1.0" fill="#8c8c8c"/>
<text transform="translate(290.30 170.78) scale(0.920 1)" font-size="11.5" fill="#e4e4e4" text-anchor="end" font-weight="normal">0</text>
<rect x="290.8" y="139.62" width="105.80000000000001" height="1.0" fill="#8c8c8c"/>
<text transform="translate(290.30 144.32) scale(0.920 1)" font-size="11.5" fill="#e4e4e4" text-anchor="end" font-weight="normal">1</text>
<rect x="290.8" y="113.17" width="105.80000000000001" height="1.0" fill="#8c8c8c"/>
<text transform="translate(290.30 117.87) scale(0.920 1)" font-size="11.5" fill="#e4e4e4" text-anchor="end" font-weight="normal">2</text>
<rect x="290.8" y="86.71" width="105.80000000000001" height="1.0" fill="#8c8c8c"/>
<text transform="translate(290.30 91.41) scale(0.920 1)" font-size="11.5" fill="#e4e4e4" text-anchor="end" font-weight="normal">3</text>
<rect x="290.8" y="60.26" width="105.80000000000001" height="1.0" fill="#8c8c8c"/>
<text transform="translate(290.30 64.96) scale(0.920 1)" font-size="11.5" fill="#e4e4e4" text-anchor="end" font-weight="normal">4</text>
<rect x="290.8" y="33.80" width="105.80000000000001" height="1.0" fill="#8c8c8c"/>
<text transform="translate(290.30 38.50) scale(0.920 1)" font-size="11.5" fill="#e4e4e4" text-anchor="end" font-weight="normal">5</text>
<rect x="303.93" y="61.48" width="83.04" height="105.70" fill="#000"/>
<rect x="305.13" y="62.68" width="80.64" height="103.30" fill="url(#vg)"/>
<rect x="294.3" y="34.3" width="102.30000000000001" height="238.09999999999997" fill="none" stroke="#9a9a9a" stroke-width="1.2"/>
<rect x="293.8" y="33.40" width="103.30000000000001" height="1.8" fill="#c8c828" fill-opacity="0.85"/>
<rect x="293.8" y="86.41" width="103.30000000000001" height="1.6" fill="#0a7a14" fill-opacity="0.85"/>
<rect x="293.8" y="245.24" width="103.30000000000001" height="1.4" fill="#0a7a14" fill-opacity="0.85"/>
<text x="325.50" y="30.50" font-size="10.5" fill="#f0f0f0" text-anchor="start" font-weight="normal" textLength="28.2" lengthAdjust="spacingAndGlyphs">DeltaL</text>
<rect x="427.3" y="34.3" width="102.49999999999994" height="238.09999999999997" fill="#232323"/>
<rect x="423.8" y="271.90" width="105.99999999999994" height="1.0" fill="#8c8c8c"/>
<text transform="translate(423.30 276.60) scale(0.920 1)" font-size="11.5" fill="#e4e4e4" text-anchor="end" font-weight="normal">-6</text>
<rect x="423.8" y="232.22" width="105.99999999999994" height="1.0" fill="#8c8c8c"/>
<text transform="translate(423.30 236.92) scale(0.920 1)" font-size="11.5" fill="#e4e4e4" text-anchor="end" font-weight="normal">-4</text>
<rect x="423.8" y="192.53" width="105.99999999999994" height="1.0" fill="#8c8c8c"/>
<text transform="translate(423.30 197.23) scale(0.920 1)" font-size="11.5" fill="#e4e4e4" text-anchor="end" font-weight="normal">-2</text>
<rect x="423.8" y="152.85" width="105.99999999999994" height="1.0" fill="#8c8c8c"/>
<text transform="translate(423.30 157.55) scale(0.920 1)" font-size="11.5" fill="#e4e4e4" text-anchor="end" font-weight="normal">0</text>
<rect x="423.8" y="113.17" width="105.99999999999994" height="1.0" fill="#8c8c8c"/>
<text transform="translate(423.30 117.87) scale(0.920 1)" font-size="11.5" fill="#e4e4e4" text-anchor="end" font-weight="normal">2</text>
<rect x="423.8" y="73.48" width="105.99999999999994" height="1.0" fill="#8c8c8c"/>
<text transform="translate(423.30 78.18) scale(0.920 1)" font-size="11.5" fill="#e4e4e4" text-anchor="end" font-weight="normal">4</text>
<rect x="423.8" y="33.80" width="105.99999999999994" height="1.0" fill="#8c8c8c"/>
<text transform="translate(423.30 38.50) scale(0.920 1)" font-size="11.5" fill="#e4e4e4" text-anchor="end" font-weight="normal">6</text>
<rect x="436.95" y="41.64" width="83.20" height="112.31" fill="#000"/>
<rect x="438.15" y="42.84" width="80.80" height="109.91" fill="url(#vg)"/>
<rect x="427.3" y="34.3" width="102.49999999999994" height="238.09999999999997" fill="none" stroke="#9a9a9a" stroke-width="1.2"/>
<rect x="426.8" y="53.24" width="103.49999999999994" height="1.8" fill="#c8c828" fill-opacity="0.85"/>
<rect x="426.8" y="93.02" width="103.49999999999994" height="1.6" fill="#0a7a14" fill-opacity="0.85"/>
<rect x="426.8" y="212.18" width="103.49999999999994" height="1.4" fill="#0a7a14" fill-opacity="0.85"/>
<rect x="426.8" y="251.66" width="103.49999999999994" height="1.8" fill="#c8c828" fill-opacity="0.85"/>
<text x="457.60" y="30.50" font-size="10.5" fill="#f0f0f0" text-anchor="start" font-weight="normal" textLength="30" lengthAdjust="spacingAndGlyphs">DeltaC</text>
<rect x="566.6" y="34.3" width="106.10000000000002" height="238.09999999999997" fill="#232323"/>
<rect x="563.1" y="271.90" width="109.60000000000002" height="1.0" fill="#8c8c8c"/>
<text transform="translate(562.60 276.60) scale(0.920 1)" font-size="11.5" fill="#e4e4e4" text-anchor="end" font-weight="normal">-20</text>
<rect x="563.1" y="242.14" width="109.60000000000002" height="1.0" fill="#8c8c8c"/>
<text transform="translate(562.60 246.84) scale(0.920 1)" font-size="11.5" fill="#e4e4e4" text-anchor="end" font-weight="normal">-15</text>
<rect x="563.1" y="212.37" width="109.60000000000002" height="1.0" fill="#8c8c8c"/>
<text transform="translate(562.60 217.07) scale(0.920 1)" font-size="11.5" fill="#e4e4e4" text-anchor="end" font-weight="normal">-10</text>
<rect x="563.1" y="182.61" width="109.60000000000002" height="1.0" fill="#8c8c8c"/>
<text transform="translate(562.60 187.31) scale(0.920 1)" font-size="11.5" fill="#e4e4e4" text-anchor="end" font-weight="normal">-5</text>
<rect x="563.1" y="152.85" width="109.60000000000002" height="1.0" fill="#8c8c8c"/>
<text transform="translate(562.60 157.55) scale(0.920 1)" font-size="11.5" fill="#e4e4e4" text-anchor="end" font-weight="normal">0</text>
<rect x="563.1" y="123.09" width="109.60000000000002" height="1.0" fill="#8c8c8c"/>
<text transform="translate(562.60 127.79) scale(0.920 1)" font-size="11.5" fill="#e4e4e4" text-anchor="end" font-weight="normal">5</text>
<rect x="563.1" y="93.32" width="109.60000000000002" height="1.0" fill="#8c8c8c"/>
<text transform="translate(562.60 98.02) scale(0.920 1)" font-size="11.5" fill="#e4e4e4" text-anchor="end" font-weight="normal">10</text>
<rect x="563.1" y="63.56" width="109.60000000000002" height="1.0" fill="#8c8c8c"/>
<text transform="translate(562.60 68.26) scale(0.920 1)" font-size="11.5" fill="#e4e4e4" text-anchor="end" font-weight="normal">15</text>
<rect x="563.1" y="33.80" width="109.60000000000002" height="1.0" fill="#8c8c8c"/>
<text transform="translate(562.60 38.50) scale(0.920 1)" font-size="11.5" fill="#e4e4e4" text-anchor="end" font-weight="normal">20</text>
<rect x="576.61" y="67.45" width="86.08" height="86.50" fill="#000"/>
<rect x="577.81" y="68.65" width="83.68" height="84.10" fill="url(#vg)"/>
<rect x="566.6" y="34.3" width="106.10000000000002" height="238.09999999999997" fill="none" stroke="#9a9a9a" stroke-width="1.2"/>
<rect x="566.1" y="93.02" width="107.10000000000002" height="1.6" fill="#d02020" fill-opacity="0.85"/>
<rect x="566.1" y="122.79" width="107.10000000000002" height="1.6" fill="#c8c828" fill-opacity="0.85"/>
<rect x="566.1" y="134.79" width="107.10000000000002" height="1.4" fill="#0a7a14" fill-opacity="0.85"/>
<rect x="566.1" y="170.51" width="107.10000000000002" height="1.4" fill="#0a7a14" fill-opacity="0.85"/>
<rect x="566.1" y="182.31" width="107.10000000000002" height="1.6" fill="#c8c828" fill-opacity="0.85"/>
<rect x="566.1" y="212.07" width="107.10000000000002" height="1.6" fill="#d02020" fill-opacity="0.85"/>
<text x="594.70" y="30.50" font-size="10.5" fill="#f0f0f0" text-anchor="start" font-weight="normal" textLength="30.6" lengthAdjust="spacingAndGlyphs">DeltaH</text>
<clipPath id="swc"><rect x="281.5" y="277" width="400" height="128.5"/></clipPath>
<rect x="281.5" y="277" width="400" height="128.5" fill="#000"/>
<g clip-path="url(#swc)">
<rect x="294.20" y="282.3" width="40.5" height="42.4" fill="#f2ffff" stroke="#e8e8e8" stroke-width="1"/>
<rect x="294.20" y="336.3" width="40.5" height="42.4" fill="#fcfcfc" stroke="#e8e8e8" stroke-width="1"/>
<text transform="translate(314.40 389.30) scale(0.920 1)" font-size="9.3" fill="#fff" text-anchor="middle" font-weight="normal">White</text>
<rect x="341.90" y="282.3" width="40.5" height="42.4" fill="#d7eefd" stroke="#e8e8e8" stroke-width="1"/>
<rect x="341.90" y="336.3" width="40.5" height="42.4" fill="#e6e6e6" stroke="#e8e8e8" stroke-width="1"/>
<text transform="translate(362.10 389.30) scale(0.920 1)" font-size="9.3" fill="#fff" text-anchor="middle" font-weight="normal">Gray 80</text>
<rect x="389.60" y="282.3" width="40.5" height="42.4" fill="#c1daf2" stroke="#e8e8e8" stroke-width="1"/>
<rect x="389.60" y="336.3" width="40.5" height="42.4" fill="#d0d0d0" stroke="#e8e8e8" stroke-width="1"/>
<text transform="translate(409.80 389.30) scale(0.920 1)" font-size="9.3" fill="#fff" text-anchor="middle" font-weight="normal">Gray 65</text>
<rect x="437.30" y="282.3" width="40.5" height="42.4" fill="#aac2dd" stroke="#e8e8e8" stroke-width="1"/>
<rect x="437.30" y="336.3" width="40.5" height="42.4" fill="#b9b9b9" stroke="#e8e8e8" stroke-width="1"/>
<text transform="translate(457.50 389.30) scale(0.920 1)" font-size="9.3" fill="#fff" text-anchor="middle" font-weight="normal">Gray 50</text>
<rect x="485.00" y="282.3" width="40.5" height="42.4" fill="#8fa5c1" stroke="#e8e8e8" stroke-width="1"/>
<rect x="485.00" y="336.3" width="40.5" height="42.4" fill="#9d9d9d" stroke="#e8e8e8" stroke-width="1"/>
<text transform="translate(505.20 389.30) scale(0.920 1)" font-size="9.3" fill="#fff" text-anchor="middle" font-weight="normal">Gray 35</text>
<rect x="532.70" y="282.3" width="40.5" height="42.4" fill="#07080c" stroke="#e8e8e8" stroke-width="1"/>
<rect x="532.70" y="336.3" width="40.5" height="42.4" fill="#000000" stroke="#e8e8e8" stroke-width="1"/>
<text transform="translate(552.90 389.30) scale(0.920 1)" font-size="9.3" fill="#fff" text-anchor="middle" font-weight="normal">Black</text>
<rect x="580.40" y="282.3" width="40.5" height="42.4" fill="#63585d" stroke="#e8e8e8" stroke-width="1"/>
<rect x="580.40" y="336.3" width="40.5" height="42.4" fill="#735244" stroke="#e8e8e8" stroke-width="1"/>
<text transform="translate(600.60 389.30) scale(0.920 1)" font-size="9.3" fill="#fff" text-anchor="middle" font-weight="normal">Dark Skin</text>
<rect x="628.10" y="282.3" width="40.5" height="42.4" fill="#ac9da6" stroke="#e8e8e8" stroke-width="1"/>
<rect x="628.10" y="336.3" width="40.5" height="42.4" fill="#c29682" stroke="#e8e8e8" stroke-width="1"/>
<text transform="translate(648.30 389.30) scale(0.920 1)" font-size="9.3" fill="#fff" text-anchor="middle" font-weight="normal">Light Skin</text>
<rect x="675.80" y="282.3" width="40.5" height="42.4" fill="#5883bc" stroke="#e8e8e8" stroke-width="1"/>
<rect x="675.80" y="336.3" width="40.5" height="42.4" fill="#627a9d" stroke="#e8e8e8" stroke-width="1"/>
<text transform="translate(696.00 389.30) scale(0.920 1)" font-size="9.3" fill="#fff" text-anchor="middle" font-weight="normal">Blue Sky</text>
</g>
<text transform="translate(291.2 303.5) rotate(-90)" font-size="9.3" fill="#fff" text-anchor="middle">Actual</text>
<text transform="translate(291.2 357.5) rotate(-90)" font-size="9.3" fill="#fff" text-anchor="middle">Target</text>
<rect x="281.5" y="404.6" width="400" height="11.6" fill="#656565"/>
<rect x="294.8" y="405.6" width="128" height="9.8" rx="4.5" fill="#434343"/>
<rect x="283" y="406" width="10" height="9.5" rx="1.5" fill="#8a8a8a"/>
<path d="M285.3 410.7 L290.5 407.3 L290.5 414.1 Z" fill="#333"/>
<rect x="671" y="406" width="10" height="9.5" rx="1.5" fill="#8a8a8a"/>
<path d="M678.8 410.7 L673.6 407.3 L673.6 414.1 Z" fill="#333"/>
<rect x="226" y="416.7" width="908.5" height="10.15" fill="#2b2b2b"/>
<rect x="226" y="426.85" width="908.5" height="10.15" fill="#1b1b1b"/>
<rect x="226" y="416.7" width="7" height="20.30000000000001" fill="#000"/>
<text x="291.00" y="431.10" font-size="12" fill="#f0f0f0" text-anchor="start" font-weight="normal" textLength="20.3" lengthAdjust="spacingAndGlyphs">White</text>
<text x="324.20" y="431.10" font-size="12" fill="#f0f0f0" text-anchor="start" font-weight="normal" textLength="25.7" lengthAdjust="spacingAndGlyphs">Gray 80</text>
<text x="357.40" y="431.10" font-size="12" fill="#f0f0f0" text-anchor="start" font-weight="normal" textLength="25.7" lengthAdjust="spacingAndGlyphs">Gray 65</text>
<text x="390.50" y="431.10" font-size="12" fill="#f0f0f0" text-anchor="start" font-weight="normal" textLength="25.7" lengthAdjust="spacingAndGlyphs">Gray 50</text>
<text x="423.70" y="431.10" font-size="12" fill="#f0f0f0" text-anchor="start" font-weight="normal" textLength="25.7" lengthAdjust="spacingAndGlyphs">Gray 35</text>
<text x="453.10" y="431.10" font-size="12" fill="#f0f0f0" text-anchor="start" font-weight="normal" textLength="17.9" lengthAdjust="spacingAndGlyphs">Black</text>
<text x="477.70" y="431.10" font-size="12" fill="#f0f0f0" text-anchor="start" font-weight="normal" textLength="30.7" lengthAdjust="spacingAndGlyphs">Dark Skin</text>
<text x="512.60" y="431.10" font-size="12" fill="#f0f0f0" text-anchor="start" font-weight="normal" textLength="31.5" lengthAdjust="spacingAndGlyphs">Light Skin</text>
<text x="548.70" y="431.10" font-size="12" fill="#f0f0f0" text-anchor="start" font-weight="normal" textLength="28.3" lengthAdjust="spacingAndGlyphs">Blue Sky</text>
<text x="580.70" y="431.10" font-size="12" fill="#f0f0f0" text-anchor="start" font-weight="normal" textLength="23" lengthAdjust="spacingAndGlyphs">Foliage</text>
<text x="609.40" y="431.10" font-size="12" fill="#f0f0f0" text-anchor="start" font-weight="normal" textLength="38.5" lengthAdjust="spacingAndGlyphs">Blue Flower</text>
<text x="652.70" y="431.10" font-size="12" fill="#f0f0f0" text-anchor="start" font-weight="normal" textLength="42" lengthAdjust="spacingAndGlyphs">Bluish Green</text>
<text x="699.20" y="431.10" font-size="12" fill="#f0f0f0" text-anchor="start" font-weight="normal" textLength="23.5" lengthAdjust="spacingAndGlyphs">Orange</text>
<text x="727.80" y="431.10" font-size="12" fill="#f0f0f0" text-anchor="start" font-weight="normal" textLength="43.6" lengthAdjust="spacingAndGlyphs">Purplish Blue</text>
<text x="775.30" y="431.10" font-size="12" fill="#f0f0f0" text-anchor="start" font-weight="normal" textLength="47.6" lengthAdjust="spacingAndGlyphs">Moderate Red</text>
<text x="827.50" y="431.10" font-size="12" fill="#f0f0f0" text-anchor="start" font-weight="normal" textLength="21.4" lengthAdjust="spacingAndGlyphs">Purple</text>
<text x="855.80" y="431.10" font-size="12" fill="#f0f0f0" text-anchor="start" font-weight="normal" textLength="43.3" lengthAdjust="spacingAndGlyphs">Yellow Green</text>
<text x="903.40" y="431.10" font-size="12" fill="#f0f0f0" text-anchor="start" font-weight="normal" textLength="47.6" lengthAdjust="spacingAndGlyphs">Orange Yellow</text>
<text x="955.30" y="431.10" font-size="12" fill="#f0f0f0" text-anchor="start" font-weight="normal" textLength="14.7" lengthAdjust="spacingAndGlyphs">Blue</text>
<text x="983.90" y="431.10" font-size="12" fill="#f0f0f0" text-anchor="start" font-weight="normal" textLength="20.6" lengthAdjust="spacingAndGlyphs">Green</text>
<text x="1012.80" y="431.10" font-size="12" fill="#f0f0f0" text-anchor="start" font-weight="normal" textLength="12.3" lengthAdjust="spacingAndGlyphs">Red</text>
<text x="1041.40" y="431.10" font-size="12" fill="#f0f0f0" text-anchor="start" font-weight="normal" textLength="20.9" lengthAdjust="spacingAndGlyphs">Yellow</text>
<text x="1074.60" y="431.10" font-size="12" fill="#f0f0f0" text-anchor="start" font-weight="normal" textLength="29.1" lengthAdjust="spacingAndGlyphs">Magenta</text>
<text x="1108.00" y="431.10" font-size="12" fill="#f0f0f0" text-anchor="start" font-weight="normal" textLength="16" lengthAdjust="spacingAndGlyphs">Cyan</text>
<rect x="226" y="437.00" width="908.5" height="18.28" fill="#404040"/>
<rect x="226" y="437.00" width="7" height="18.28" fill="#222"/>
<text x="234.90" y="451.00" font-size="12" fill="#f0f0f0" text-anchor="start" font-weight="normal" textLength="27.8" lengthAdjust="spacingAndGlyphs">x: CIE31</text>
<text transform="translate(291.00 451.00) scale(0.648 1)" font-size="12" fill="#f0f0f0" text-anchor="start" font-weight="normal">0,305</text>
<text transform="translate(324.20 451.00) scale(0.648 1)" font-size="12" fill="#f0f0f0" text-anchor="start" font-weight="normal">0,289</text>
<text transform="translate(357.40 451.00) scale(0.648 1)" font-size="12" fill="#f0f0f0" text-anchor="start" font-weight="normal">0,281</text>
<text transform="translate(390.50 451.00) scale(0.648 1)" font-size="12" fill="#f0f0f0" text-anchor="start" font-weight="normal">0,276</text>
<text transform="translate(423.70 451.00) scale(0.648 1)" font-size="12" fill="#f0f0f0" text-anchor="start" font-weight="normal">0,271</text>
<text transform="translate(453.10 451.00) scale(0.648 1)" font-size="12" fill="#f0f0f0" text-anchor="start" font-weight="normal">0,275</text>
<text transform="translate(477.70 451.00) scale(0.648 1)" font-size="12" fill="#f0f0f0" text-anchor="start" font-weight="normal">0,324</text>
<text transform="translate(512.60 451.00) scale(0.648 1)" font-size="12" fill="#f0f0f0" text-anchor="start" font-weight="normal">0,319</text>
<text transform="translate(548.70 451.00) scale(0.648 1)" font-size="12" fill="#f0f0f0" text-anchor="start" font-weight="normal">0,226</text>
<text transform="translate(580.70 451.00) scale(0.648 1)" font-size="12" fill="#f0f0f0" text-anchor="start" font-weight="normal">0,300</text>
<text transform="translate(609.40 451.00) scale(0.648 1)" font-size="12" fill="#f0f0f0" text-anchor="start" font-weight="normal">0,234</text>
<text transform="translate(652.70 451.00) scale(0.648 1)" font-size="12" fill="#f0f0f0" text-anchor="start" font-weight="normal">0,250</text>
<text transform="translate(699.20 451.00) scale(0.648 1)" font-size="12" fill="#f0f0f0" text-anchor="start" font-weight="normal">0,446</text>
<text transform="translate(727.80 451.00) scale(0.648 1)" font-size="12" fill="#f0f0f0" text-anchor="start" font-weight="normal">0,201</text>
<text transform="translate(775.30 451.00) scale(0.648 1)" font-size="12" fill="#f0f0f0" text-anchor="start" font-weight="normal">0,363</text>
<text transform="translate(827.50 451.00) scale(0.648 1)" font-size="12" fill="#f0f0f0" text-anchor="start" font-weight="normal">0,236</text>
<text transform="translate(855.80 451.00) scale(0.648 1)" font-size="12" fill="#f0f0f0" text-anchor="start" font-weight="normal">0,348</text>
<text transform="translate(903.40 451.00) scale(0.648 1)" font-size="12" fill="#f0f0f0" text-anchor="start" font-weight="normal">0,424</text>
<text transform="translate(955.30 451.00) scale(0.648 1)" font-size="12" fill="#f0f0f0" text-anchor="start" font-weight="normal">0,183</text>
<text transform="translate(983.90 451.00) scale(0.648 1)" font-size="12" fill="#f0f0f0" text-anchor="start" font-weight="normal">0,293</text>
<text transform="translate(1012.80 451.00) scale(0.648 1)" font-size="12" fill="#f0f0f0" text-anchor="start" font-weight="normal">0,425</text>
<text transform="translate(1041.40 451.00) scale(0.648 1)" font-size="12" fill="#f0f0f0" text-anchor="start" font-weight="normal">0,415</text>
<text transform="translate(1074.60 451.00) scale(0.648 1)" font-size="12" fill="#f0f0f0" text-anchor="start" font-weight="normal">0,293</text>
<text transform="translate(1108.00 451.00) scale(0.648 1)" font-size="12" fill="#f0f0f0" text-anchor="start" font-weight="normal">0,206</text>
<rect x="226" y="455.23" width="908.5" height="18.28" fill="#7f7f7f"/>
<rect x="226" y="455.23" width="7" height="18.28" fill="#222"/>
<text x="234.90" y="469.23" font-size="12" fill="#f0f0f0" text-anchor="start" font-weight="normal" textLength="27.8" lengthAdjust="spacingAndGlyphs">y: CIE31</text>
<text transform="translate(291.00 469.23) scale(0.648 1)" font-size="12" fill="#f0f0f0" text-anchor="start" font-weight="normal">0,333</text>
<text transform="translate(324.20 469.23) scale(0.648 1)" font-size="12" fill="#f0f0f0" text-anchor="start" font-weight="normal">0,313</text>
<text transform="translate(357.40 469.23) scale(0.648 1)" font-size="12" fill="#f0f0f0" text-anchor="start" font-weight="normal">0,303</text>
<text transform="translate(390.50 469.23) scale(0.648 1)" font-size="12" fill="#f0f0f0" text-anchor="start" font-weight="normal">0,295</text>
<text transform="translate(423.70 469.23) scale(0.648 1)" font-size="12" fill="#f0f0f0" text-anchor="start" font-weight="normal">0,288</text>
<text transform="translate(453.10 469.23) scale(0.648 1)" font-size="12" fill="#f0f0f0" text-anchor="start" font-weight="normal">0,276</text>
<text transform="translate(477.70 469.23) scale(0.648 1)" font-size="12" fill="#f0f0f0" text-anchor="start" font-weight="normal">0,319</text>
<text transform="translate(512.60 469.23) scale(0.648 1)" font-size="12" fill="#f0f0f0" text-anchor="start" font-weight="normal">0,316</text>
<text transform="translate(548.70 469.23) scale(0.648 1)" font-size="12" fill="#f0f0f0" text-anchor="start" font-weight="normal">0,234</text>
<text transform="translate(580.70 469.23) scale(0.648 1)" font-size="12" fill="#f0f0f0" text-anchor="start" font-weight="normal">0,368</text>
<text transform="translate(609.40 469.23) scale(0.648 1)" font-size="12" fill="#f0f0f0" text-anchor="start" font-weight="normal">0,228</text>
<text transform="translate(652.70 469.23) scale(0.648 1)" font-size="12" fill="#f0f0f0" text-anchor="start" font-weight="normal">0,314</text>
<text transform="translate(699.20 469.23) scale(0.648 1)" font-size="12" fill="#f0f0f0" text-anchor="start" font-weight="normal">0,396</text>
<text transform="translate(727.80 469.23) scale(0.648 1)" font-size="12" fill="#f0f0f0" text-anchor="start" font-weight="normal">0,183</text>
<text transform="translate(775.30 469.23) scale(0.648 1)" font-size="12" fill="#f0f0f0" text-anchor="start" font-weight="normal">0,282</text>
<text transform="translate(827.50 469.23) scale(0.648 1)" font-size="12" fill="#f0f0f0" text-anchor="start" font-weight="normal">0,195</text>
<text transform="translate(855.80 469.23) scale(0.648 1)" font-size="12" fill="#f0f0f0" text-anchor="start" font-weight="normal">0,453</text>
<text transform="translate(903.40 469.23) scale(0.648 1)" font-size="12" fill="#f0f0f0" text-anchor="start" font-weight="normal">0,425</text>
<text transform="translate(955.30 469.23) scale(0.648 1)" font-size="12" fill="#f0f0f0" text-anchor="start" font-weight="normal">0,146</text>
<text transform="translate(983.90 469.23) scale(0.648 1)" font-size="12" fill="#f0f0f0" text-anchor="start" font-weight="normal">0,423</text>
<text transform="translate(1012.80 469.23) scale(0.648 1)" font-size="12" fill="#f0f0f0" text-anchor="start" font-weight="normal">0,292</text>
<text transform="translate(1041.40 469.23) scale(0.648 1)" font-size="12" fill="#f0f0f0" text-anchor="start" font-weight="normal">0,462</text>
<text transform="translate(1074.60 469.23) scale(0.648 1)" font-size="12" fill="#f0f0f0" text-anchor="start" font-weight="normal">0,223</text>
<text transform="translate(1108.00 469.23) scale(0.648 1)" font-size="12" fill="#f0f0f0" text-anchor="start" font-weight="normal">0,237</text>
<rect x="226" y="473.46" width="908.5" height="18.28" fill="#404040"/>
<rect x="226" y="473.46" width="7" height="18.28" fill="#222"/>
<text x="234.90" y="487.46" font-size="12" fill="#f0f0f0" text-anchor="start" font-weight="normal" textLength="4.4" lengthAdjust="spacingAndGlyphs">Y</text>
<text transform="translate(291.00 487.46) scale(0.648 1)" font-size="12" fill="#f0f0f0" text-anchor="start" font-weight="normal">208,645</text>
<text transform="translate(324.20 487.46) scale(0.648 1)" font-size="12" fill="#f0f0f0" text-anchor="start" font-weight="normal">172,254</text>
<text transform="translate(357.40 487.46) scale(0.648 1)" font-size="12" fill="#f0f0f0" text-anchor="start" font-weight="normal">142,058</text>
<text transform="translate(390.50 487.46) scale(0.648 1)" font-size="12" fill="#f0f0f0" text-anchor="start" font-weight="normal">109,408</text>
<text transform="translate(423.70 487.46) scale(0.648 1)" font-size="12" fill="#f0f0f0" text-anchor="start" font-weight="normal">76,232</text>
<text transform="translate(453.10 487.46) scale(0.648 1)" font-size="12" fill="#f0f0f0" text-anchor="start" font-weight="normal">0,503</text>
<text transform="translate(477.70 487.46) scale(0.648 1)" font-size="12" fill="#f0f0f0" text-anchor="start" font-weight="normal">21,927</text>
<text transform="translate(512.60 487.46) scale(0.648 1)" font-size="12" fill="#f0f0f0" text-anchor="start" font-weight="normal">74,272</text>
<text transform="translate(548.70 487.46) scale(0.648 1)" font-size="12" fill="#f0f0f0" text-anchor="start" font-weight="normal">45,976</text>
<text transform="translate(580.70 487.46) scale(0.648 1)" font-size="12" fill="#f0f0f0" text-anchor="start" font-weight="normal">28,574</text>
<text transform="translate(609.40 487.46) scale(0.648 1)" font-size="12" fill="#f0f0f0" text-anchor="start" font-weight="normal">56,604</text>
<text transform="translate(652.70 487.46) scale(0.648 1)" font-size="12" fill="#f0f0f0" text-anchor="start" font-weight="normal">94,320</text>
<text transform="translate(699.20 487.46) scale(0.648 1)" font-size="12" fill="#f0f0f0" text-anchor="start" font-weight="normal">55,866</text>
<text transform="translate(727.80 487.46) scale(0.648 1)" font-size="12" fill="#f0f0f0" text-anchor="start" font-weight="normal">33,078</text>
<text transform="translate(775.30 487.46) scale(0.648 1)" font-size="12" fill="#f0f0f0" text-anchor="start" font-weight="normal">39,336</text>
<text transform="translate(827.50 487.46) scale(0.648 1)" font-size="12" fill="#f0f0f0" text-anchor="start" font-weight="normal">17,301</text>
<text transform="translate(855.80 487.46) scale(0.648 1)" font-size="12" fill="#f0f0f0" text-anchor="start" font-weight="normal">86,722</text>
<text transform="translate(903.40 487.46) scale(0.648 1)" font-size="12" fill="#f0f0f0" text-anchor="start" font-weight="normal">84,503</text>
<text transform="translate(955.30 487.46) scale(0.648 1)" font-size="12" fill="#f0f0f0" text-anchor="start" font-weight="normal">20,092</text>
<text transform="translate(983.90 487.46) scale(0.648 1)" font-size="12" fill="#f0f0f0" text-anchor="start" font-weight="normal">48,584</text>
<text transform="translate(1012.80 487.46) scale(0.648 1)" font-size="12" fill="#f0f0f0" text-anchor="start" font-weight="normal">22,631</text>
<text transform="translate(1041.40 487.46) scale(0.648 1)" font-size="12" fill="#f0f0f0" text-anchor="start" font-weight="normal">117,536</text>
<text transform="translate(1074.60 487.46) scale(0.648 1)" font-size="12" fill="#f0f0f0" text-anchor="start" font-weight="normal">43,277</text>
<text transform="translate(1108.00 487.46) scale(0.648 1)" font-size="12" fill="#f0f0f0" text-anchor="start" font-weight="normal">48,081</text>
<rect x="226" y="491.69" width="908.5" height="18.28" fill="#7f7f7f"/>
<rect x="226" y="491.69" width="7" height="18.28" fill="#222"/>
<text x="234.90" y="505.69" font-size="12" fill="#f0f0f0" text-anchor="start" font-weight="normal" textLength="51" lengthAdjust="spacingAndGlyphs">Target x:CIE31</text>
<text transform="translate(291.00 505.69) scale(0.648 1)" font-size="12" fill="#f0f0f0" text-anchor="start" font-weight="normal">0,313</text>
<text transform="translate(324.20 505.69) scale(0.648 1)" font-size="12" fill="#f0f0f0" text-anchor="start" font-weight="normal">0,313</text>
<text transform="translate(357.40 505.69) scale(0.648 1)" font-size="12" fill="#f0f0f0" text-anchor="start" font-weight="normal">0,313</text>
<text transform="translate(390.50 505.69) scale(0.648 1)" font-size="12" fill="#f0f0f0" text-anchor="start" font-weight="normal">0,313</text>
<text transform="translate(423.70 505.69) scale(0.648 1)" font-size="12" fill="#f0f0f0" text-anchor="start" font-weight="normal">0,313</text>
<text transform="translate(453.10 505.69) scale(0.648 1)" font-size="12" fill="#f0f0f0" text-anchor="start" font-weight="normal">0,313</text>
<text transform="translate(477.70 505.69) scale(0.648 1)" font-size="12" fill="#f0f0f0" text-anchor="start" font-weight="normal">0,400</text>
<text transform="translate(512.60 505.69) scale(0.648 1)" font-size="12" fill="#f0f0f0" text-anchor="start" font-weight="normal">0,380</text>
<text transform="translate(548.70 505.69) scale(0.648 1)" font-size="12" fill="#f0f0f0" text-anchor="start" font-weight="normal">0,250</text>
<text transform="translate(580.70 505.69) scale(0.648 1)" font-size="12" fill="#f0f0f0" text-anchor="start" font-weight="normal">0,340</text>
<text transform="translate(609.40 505.69) scale(0.648 1)" font-size="12" fill="#f0f0f0" text-anchor="start" font-weight="normal">0,268</text>
<text transform="translate(652.70 505.69) scale(0.648 1)" font-size="12" fill="#f0f0f0" text-anchor="start" font-weight="normal">0,263</text>
<text transform="translate(699.20 505.69) scale(0.648 1)" font-size="12" fill="#f0f0f0" text-anchor="start" font-weight="normal">0,512</text>
<text transform="translate(727.80 505.69) scale(0.648 1)" font-size="12" fill="#f0f0f0" text-anchor="start" font-weight="normal">0,217</text>
<text transform="translate(775.30 505.69) scale(0.648 1)" font-size="12" fill="#f0f0f0" text-anchor="start" font-weight="normal">0,462</text>
<text transform="translate(827.50 505.69) scale(0.648 1)" font-size="12" fill="#f0f0f0" text-anchor="start" font-weight="normal">0,290</text>
<text transform="translate(855.80 505.69) scale(0.648 1)" font-size="12" fill="#f0f0f0" text-anchor="start" font-weight="normal">0,376</text>
<text transform="translate(903.40 505.69) scale(0.648 1)" font-size="12" fill="#f0f0f0" text-anchor="start" font-weight="normal">0,474</text>
<text transform="translate(955.30 505.69) scale(0.648 1)" font-size="12" fill="#f0f0f0" text-anchor="start" font-weight="normal">0,192</text>
<text transform="translate(983.90 505.69) scale(0.648 1)" font-size="12" fill="#f0f0f0" text-anchor="start" font-weight="normal">0,305</text>
<text transform="translate(1012.80 505.69) scale(0.648 1)" font-size="12" fill="#f0f0f0" text-anchor="start" font-weight="normal">0,537</text>
<text transform="translate(1041.40 505.69) scale(0.648 1)" font-size="12" fill="#f0f0f0" text-anchor="start" font-weight="normal">0,447</text>
<text transform="translate(1074.60 505.69) scale(0.648 1)" font-size="12" fill="#f0f0f0" text-anchor="start" font-weight="normal">0,374</text>
<text transform="translate(1108.00 505.69) scale(0.648 1)" font-size="12" fill="#f0f0f0" text-anchor="start" font-weight="normal">0,208</text>
<rect x="226" y="509.91" width="908.5" height="18.28" fill="#404040"/>
<rect x="226" y="509.91" width="7" height="18.28" fill="#222"/>
<text x="234.90" y="523.91" font-size="12" fill="#f0f0f0" text-anchor="start" font-weight="normal" textLength="51" lengthAdjust="spacingAndGlyphs">Target y:CIE31</text>
<text transform="translate(291.00 523.91) scale(0.648 1)" font-size="12" fill="#f0f0f0" text-anchor="start" font-weight="normal">0,329</text>
<text transform="translate(324.20 523.91) scale(0.648 1)" font-size="12" fill="#f0f0f0" text-anchor="start" font-weight="normal">0,329</text>
<text transform="translate(357.40 523.91) scale(0.648 1)" font-size="12" fill="#f0f0f0" text-anchor="start" font-weight="normal">0,329</text>
<text transform="translate(390.50 523.91) scale(0.648 1)" font-size="12" fill="#f0f0f0" text-anchor="start" font-weight="normal">0,329</text>
<text transform="translate(423.70 523.91) scale(0.648 1)" font-size="12" fill="#f0f0f0" text-anchor="start" font-weight="normal">0,329</text>
<text transform="translate(453.10 523.91) scale(0.648 1)" font-size="12" fill="#f0f0f0" text-anchor="start" font-weight="normal">0,329</text>
<text transform="translate(477.70 523.91) scale(0.648 1)" font-size="12" fill="#f0f0f0" text-anchor="start" font-weight="normal">0,364</text>
<text transform="translate(512.60 523.91) scale(0.648 1)" font-size="12" fill="#f0f0f0" text-anchor="start" font-weight="normal">0,356</text>
<text transform="translate(548.70 523.91) scale(0.648 1)" font-size="12" fill="#f0f0f0" text-anchor="start" font-weight="normal">0,266</text>
<text transform="translate(580.70 523.91) scale(0.648 1)" font-size="12" fill="#f0f0f0" text-anchor="start" font-weight="normal">0,427</text>
<text transform="translate(609.40 523.91) scale(0.648 1)" font-size="12" fill="#f0f0f0" text-anchor="start" font-weight="normal">0,253</text>
<text transform="translate(652.70 523.91) scale(0.648 1)" font-size="12" fill="#f0f0f0" text-anchor="start" font-weight="normal">0,362</text>
<text transform="translate(699.20 523.91) scale(0.648 1)" font-size="12" fill="#f0f0f0" text-anchor="start" font-weight="normal">0,406</text>
<text transform="translate(727.80 523.91) scale(0.648 1)" font-size="12" fill="#f0f0f0" text-anchor="start" font-weight="normal">0,192</text>
<text transform="translate(775.30 523.91) scale(0.648 1)" font-size="12" fill="#f0f0f0" text-anchor="start" font-weight="normal">0,313</text>
<text transform="translate(827.50 523.91) scale(0.648 1)" font-size="12" fill="#f0f0f0" text-anchor="start" font-weight="normal">0,221</text>
<text transform="translate(855.80 523.91) scale(0.648 1)" font-size="12" fill="#f0f0f0" text-anchor="start" font-weight="normal">0,493</text>
<text transform="translate(903.40 523.91) scale(0.648 1)" font-size="12" fill="#f0f0f0" text-anchor="start" font-weight="normal">0,439</text>
<text transform="translate(955.30 523.91) scale(0.648 1)" font-size="12" fill="#f0f0f0" text-anchor="start" font-weight="normal">0,141</text>
<text transform="translate(983.90 523.91) scale(0.648 1)" font-size="12" fill="#f0f0f0" text-anchor="start" font-weight="normal">0,489</text>
<text transform="translate(1012.80 523.91) scale(0.648 1)" font-size="12" fill="#f0f0f0" text-anchor="start" font-weight="normal">0,317</text>
<text transform="translate(1041.40 523.91) scale(0.648 1)" font-size="12" fill="#f0f0f0" text-anchor="start" font-weight="normal">0,474</text>
<text transform="translate(1074.60 523.91) scale(0.648 1)" font-size="12" fill="#f0f0f0" text-anchor="start" font-weight="normal">0,247</text>
<text transform="translate(1108.00 523.91) scale(0.648 1)" font-size="12" fill="#f0f0f0" text-anchor="start" font-weight="normal">0,270</text>
<rect x="226" y="528.14" width="908.5" height="18.28" fill="#7f7f7f"/>
<rect x="226" y="528.14" width="7" height="18.28" fill="#222"/>
<text x="234.90" y="542.14" font-size="12" fill="#f0f0f0" text-anchor="start" font-weight="normal" textLength="29.7" lengthAdjust="spacingAndGlyphs">Target Y</text>
<text transform="translate(291.00 542.14) scale(0.648 1)" font-size="12" fill="#f0f0f0" text-anchor="start" font-weight="normal">208,645</text>
<text transform="translate(324.20 542.14) scale(0.648 1)" font-size="12" fill="#f0f0f0" text-anchor="start" font-weight="normal">165,101</text>
<text transform="translate(357.40 542.14) scale(0.648 1)" font-size="12" fill="#f0f0f0" text-anchor="start" font-weight="normal">133,032</text>
<text transform="translate(390.50 542.14) scale(0.648 1)" font-size="12" fill="#f0f0f0" text-anchor="start" font-weight="normal">102,449</text>
<text transform="translate(423.70 542.14) scale(0.648 1)" font-size="12" fill="#f0f0f0" text-anchor="start" font-weight="normal">71,339</text>
<text transform="translate(453.10 542.14) scale(0.648 1)" font-size="12" fill="#f0f0f0" text-anchor="start" font-weight="normal">0,000</text>
<text transform="translate(477.70 542.14) scale(0.648 1)" font-size="12" fill="#f0f0f0" text-anchor="start" font-weight="normal">21,017</text>
<text transform="translate(512.60 542.14) scale(0.648 1)" font-size="12" fill="#f0f0f0" text-anchor="start" font-weight="normal">72,807</text>
<text transform="translate(548.70 542.14) scale(0.648 1)" font-size="12" fill="#f0f0f0" text-anchor="start" font-weight="normal">39,013</text>
<text transform="translate(580.70 542.14) scale(0.648 1)" font-size="12" fill="#f0f0f0" text-anchor="start" font-weight="normal">27,192</text>
<text transform="translate(609.40 542.14) scale(0.648 1)" font-size="12" fill="#f0f0f0" text-anchor="start" font-weight="normal">48,653</text>
<text transform="translate(652.70 542.14) scale(0.648 1)" font-size="12" fill="#f0f0f0" text-anchor="start" font-weight="normal">87,366</text>
<text transform="translate(699.20 542.14) scale(0.648 1)" font-size="12" fill="#f0f0f0" text-anchor="start" font-weight="normal">59,146</text>
<text transform="translate(727.80 542.14) scale(0.648 1)" font-size="12" fill="#f0f0f0" text-anchor="start" font-weight="normal">24,524</text>
<text transform="translate(775.30 542.14) scale(0.648 1)" font-size="12" fill="#f0f0f0" text-anchor="start" font-weight="normal">38,966</text>
<text transform="translate(827.50 542.14) scale(0.648 1)" font-size="12" fill="#f0f0f0" text-anchor="start" font-weight="normal">13,926</text>
<text transform="translate(855.80 542.14) scale(0.648 1)" font-size="12" fill="#f0f0f0" text-anchor="start" font-weight="normal">89,210</text>
<text transform="translate(903.40 542.14) scale(0.648 1)" font-size="12" fill="#f0f0f0" text-anchor="start" font-weight="normal">88,701</text>
<text transform="translate(955.30 542.14) scale(0.648 1)" font-size="12" fill="#f0f0f0" text-anchor="start" font-weight="normal">13,025</text>
<text transform="translate(983.90 542.14) scale(0.648 1)" font-size="12" fill="#f0f0f0" text-anchor="start" font-weight="normal">47,933</text>
<text transform="translate(1012.80 542.14) scale(0.648 1)" font-size="12" fill="#f0f0f0" text-anchor="start" font-weight="normal">24,332</text>
<text transform="translate(1041.40 542.14) scale(0.648 1)" font-size="12" fill="#f0f0f0" text-anchor="start" font-weight="normal">123,025</text>
<text transform="translate(1074.60 542.14) scale(0.648 1)" font-size="12" fill="#f0f0f0" text-anchor="start" font-weight="normal">39,280</text>
<text transform="translate(1108.00 542.14) scale(0.648 1)" font-size="12" fill="#f0f0f0" text-anchor="start" font-weight="normal">40,515</text>
<rect x="226" y="546.37" width="908.5" height="18.28" fill="#404040"/>
<rect x="226" y="546.37" width="7" height="18.28" fill="#222"/>
<text x="234.90" y="560.37" font-size="12" fill="#f0f0f0" text-anchor="start" font-weight="normal" textLength="29.7" lengthAdjust="spacingAndGlyphs">ΔE 2000</text>
<text transform="translate(291.00 560.37) scale(0.648 1)" font-size="12" fill="#f0f0f0" text-anchor="start" font-weight="normal">7,125</text>
<text transform="translate(324.20 560.37) scale(0.648 1)" font-size="12" fill="#f0f0f0" text-anchor="start" font-weight="normal">9,593</text>
<text transform="translate(357.40 560.37) scale(0.648 1)" font-size="12" fill="#f0f0f0" text-anchor="start" font-weight="normal">11,266</text>
<text transform="translate(390.50 560.37) scale(0.648 1)" font-size="12" fill="#f0f0f0" text-anchor="start" font-weight="normal">12,228</text>
<text transform="translate(423.70 560.37) scale(0.648 1)" font-size="12" fill="#f0f0f0" text-anchor="start" font-weight="normal">12,505</text>
<text transform="translate(453.10 560.37) scale(0.648 1)" font-size="12" fill="#f0f0f0" text-anchor="start" font-weight="normal">2,273</text>
<text transform="translate(477.70 560.37) scale(0.648 1)" font-size="12" fill="#f0f0f0" text-anchor="start" font-weight="normal">12,308</text>
<text transform="translate(512.60 560.37) scale(0.648 1)" font-size="12" fill="#f0f0f0" text-anchor="start" font-weight="normal">14,817</text>
<text transform="translate(548.70 560.37) scale(0.648 1)" font-size="12" fill="#f0f0f0" text-anchor="start" font-weight="normal">7,142</text>
<text transform="translate(580.70 560.37) scale(0.648 1)" font-size="12" fill="#f0f0f0" text-anchor="start" font-weight="normal">8,698</text>
<text transform="translate(609.40 560.37) scale(0.648 1)" font-size="12" fill="#f0f0f0" text-anchor="start" font-weight="normal">8,261</text>
<text transform="translate(652.70 560.37) scale(0.648 1)" font-size="12" fill="#f0f0f0" text-anchor="start" font-weight="normal">12,341</text>
<text transform="translate(699.20 560.37) scale(0.648 1)" font-size="12" fill="#f0f0f0" text-anchor="start" font-weight="normal">7,419</text>
<text transform="translate(727.80 560.37) scale(0.648 1)" font-size="12" fill="#f0f0f0" text-anchor="start" font-weight="normal">6,778</text>
<text transform="translate(775.30 560.37) scale(0.648 1)" font-size="12" fill="#f0f0f0" text-anchor="start" font-weight="normal">13,474</text>
<text transform="translate(827.50 560.37) scale(0.648 1)" font-size="12" fill="#f0f0f0" text-anchor="start" font-weight="normal">9,254</text>
<text transform="translate(855.80 560.37) scale(0.648 1)" font-size="12" fill="#f0f0f0" text-anchor="start" font-weight="normal">6,068</text>
<text transform="translate(903.40 560.37) scale(0.648 1)" font-size="12" fill="#f0f0f0" text-anchor="start" font-weight="normal">7,366</text>
<text transform="translate(955.30 560.37) scale(0.648 1)" font-size="12" fill="#f0f0f0" text-anchor="start" font-weight="normal">7,294</text>
<text transform="translate(983.90 560.37) scale(0.648 1)" font-size="12" fill="#f0f0f0" text-anchor="start" font-weight="normal">6,541</text>
<text transform="translate(1012.80 560.37) scale(0.648 1)" font-size="12" fill="#f0f0f0" text-anchor="start" font-weight="normal">11,215</text>
<text transform="translate(1041.40 560.37) scale(0.648 1)" font-size="12" fill="#f0f0f0" text-anchor="start" font-weight="normal">6,023</text>
<text transform="translate(1074.60 560.37) scale(0.648 1)" font-size="12" fill="#f0f0f0" text-anchor="start" font-weight="normal">11,544</text>
<text transform="translate(1108.00 560.37) scale(0.648 1)" font-size="12" fill="#f0f0f0" text-anchor="start" font-weight="normal">9,429</text>
<text x="11.70" y="449.10" font-size="21" fill="#f0f0f0" text-anchor="start" font-weight="normal" textLength="153" lengthAdjust="spacingAndGlyphs" stroke="#f0f0f0" stroke-width="0.35">Current Reading</text>
<text x="11.70" y="478.70" font-size="17.5" fill="#f0f0f0" text-anchor="start" font-weight="normal" textLength="71.3" lengthAdjust="spacingAndGlyphs">x: 0,2065</text>
<text x="11.70" y="506.70" font-size="17.5" fill="#f0f0f0" text-anchor="start" font-weight="normal" textLength="71.3" lengthAdjust="spacingAndGlyphs">y: 0,2369</text>
<text x="11.70" y="535.20" font-size="17.5" fill="#f0f0f0" text-anchor="start" font-weight="normal" textLength="77" lengthAdjust="spacingAndGlyphs">fL: 14,033</text>
<text x="11.70" y="563.70" font-size="17.5" fill="#f0f0f0" text-anchor="start" font-weight="normal" textLength="110.4" lengthAdjust="spacingAndGlyphs">cd/m²: 48,081</text>
<rect x="691" y="17" width="475" height="390" fill="#000"/>
<rect x="696" y="22" width="465.6" height="380.2" fill="#333333"/>
<rect x="716.4" y="38.4" width="442.1" height="343.20000000000005" fill="#232323"/>
<text x="902.00" y="34.60" font-size="10.5" fill="#f0f0f0" text-anchor="start" font-weight="normal" textLength="53" lengthAdjust="spacingAndGlyphs">CIE 1931 xy</text>
<rect x="715.80" y="381.6" width="1.2" height="4" fill="#9a9a9a"/>
<text transform="translate(716.40 397.20) scale(0.920 1)" font-size="11.5" fill="#e4e4e4" text-anchor="middle" font-weight="normal">0</text>
<rect x="712.4" y="381.10" width="4" height="1.2" fill="#9a9a9a"/>
<text transform="translate(711.40 385.90) scale(0.920 1)" font-size="11.5" fill="#e4e4e4" text-anchor="end" font-weight="normal">0</text>
<rect x="768.42" y="381.6" width="1.2" height="4" fill="#9a9a9a"/>
<text transform="translate(769.02 397.20) scale(0.920 1)" font-size="11.5" fill="#e4e4e4" text-anchor="middle" font-weight="normal">0,1</text>
<rect x="712.4" y="340.42" width="4" height="1.2" fill="#9a9a9a"/>
<text transform="translate(711.40 345.22) scale(0.920 1)" font-size="11.5" fill="#e4e4e4" text-anchor="end" font-weight="normal">0,1</text>
<rect x="821.05" y="381.6" width="1.2" height="4" fill="#9a9a9a"/>
<text transform="translate(821.65 397.20) scale(0.920 1)" font-size="11.5" fill="#e4e4e4" text-anchor="middle" font-weight="normal">0,2</text>
<rect x="712.4" y="299.74" width="4" height="1.2" fill="#9a9a9a"/>
<text transform="translate(711.40 304.54) scale(0.920 1)" font-size="11.5" fill="#e4e4e4" text-anchor="end" font-weight="normal">0,2</text>
<rect x="873.67" y="381.6" width="1.2" height="4" fill="#9a9a9a"/>
<text transform="translate(874.27 397.20) scale(0.920 1)" font-size="11.5" fill="#e4e4e4" text-anchor="middle" font-weight="normal">0,3</text>
<rect x="712.4" y="259.06" width="4" height="1.2" fill="#9a9a9a"/>
<text transform="translate(711.40 263.86) scale(0.920 1)" font-size="11.5" fill="#e4e4e4" text-anchor="end" font-weight="normal">0,3</text>
<rect x="926.30" y="381.6" width="1.2" height="4" fill="#9a9a9a"/>
<text transform="translate(926.90 397.20) scale(0.920 1)" font-size="11.5" fill="#e4e4e4" text-anchor="middle" font-weight="normal">0,4</text>
<rect x="712.4" y="218.38" width="4" height="1.2" fill="#9a9a9a"/>
<text transform="translate(711.40 223.18) scale(0.920 1)" font-size="11.5" fill="#e4e4e4" text-anchor="end" font-weight="normal">0,4</text>
<rect x="978.92" y="381.6" width="1.2" height="4" fill="#9a9a9a"/>
<text transform="translate(979.52 397.20) scale(0.920 1)" font-size="11.5" fill="#e4e4e4" text-anchor="middle" font-weight="normal">0,5</text>
<rect x="712.4" y="177.70" width="4" height="1.2" fill="#9a9a9a"/>
<text transform="translate(711.40 182.50) scale(0.920 1)" font-size="11.5" fill="#e4e4e4" text-anchor="end" font-weight="normal">0,5</text>
<rect x="1031.55" y="381.6" width="1.2" height="4" fill="#9a9a9a"/>
<text transform="translate(1032.15 397.20) scale(0.920 1)" font-size="11.5" fill="#e4e4e4" text-anchor="middle" font-weight="normal">0,6</text>
<rect x="712.4" y="137.02" width="4" height="1.2" fill="#9a9a9a"/>
<text transform="translate(711.40 141.82) scale(0.920 1)" font-size="11.5" fill="#e4e4e4" text-anchor="end" font-weight="normal">0,6</text>
<rect x="1084.18" y="381.6" width="1.2" height="4" fill="#9a9a9a"/>
<text transform="translate(1084.78 397.20) scale(0.920 1)" font-size="11.5" fill="#e4e4e4" text-anchor="middle" font-weight="normal">0,7</text>
<rect x="712.4" y="96.34" width="4" height="1.2" fill="#9a9a9a"/>
<text transform="translate(711.40 101.14) scale(0.920 1)" font-size="11.5" fill="#e4e4e4" text-anchor="end" font-weight="normal">0,7</text>
<rect x="1136.80" y="381.6" width="1.2" height="4" fill="#9a9a9a"/>
<text transform="translate(1137.40 397.20) scale(0.920 1)" font-size="11.5" fill="#e4e4e4" text-anchor="middle" font-weight="normal">0,8</text>
<rect x="712.4" y="55.66" width="4" height="1.2" fill="#9a9a9a"/>
<text transform="translate(711.40 60.46) scale(0.920 1)" font-size="11.5" fill="#e4e4e4" text-anchor="end" font-weight="normal">0,8</text>
</svg>
<div id="cie"><div id="eR"></div><div id="eG"></div><div id="eB"></div><div id="tri"></div></div>
<svg width="1166" height="576" viewBox="0 0 1166 576">
<defs><clipPath id="locc"><path d="M808.0 379.7 L808.0 379.7 L807.9 379.7 L807.9 379.7 L807.8 379.7 L807.7 379.7 L807.6 379.7 L807.5 379.8 L807.4 379.8 L807.2 379.7 L807.0 379.7 L806.8 379.7 L806.6 379.6 L806.4 379.5 L806.2 379.5 L806.0 379.3 L805.8 379.2 L805.6 379.1 L805.3 378.9 L805.0 378.7 L804.6 378.5 L804.2 378.2 L803.8 377.9 L803.4 377.6 L802.9 377.3 L802.4 376.9 L801.8 376.5 L801.2 376.1 L800.5 375.6 L799.7 375.1 L798.8 374.5 L797.9 373.9 L796.9 373.2 L795.9 372.5 L794.7 371.6 L793.5 370.7 L792.2 369.6 L790.8 368.4 L789.3 367.1 L787.7 365.5 L785.9 363.4 L783.9 361.1 L781.7 358.2 L779.4 354.8 L776.8 351.0 L774.1 346.4 L771.1 341.0 L767.9 334.9 L764.4 327.7 L760.7 319.6 L756.6 310.4 L752.6 300.1 L748.5 288.4 L744.3 275.6 L740.3 261.7 L736.3 246.6 L732.3 230.4 L728.8 213.8 L725.6 196.9 L722.8 179.6 L720.7 162.7 L719.3 146.3 L718.4 130.3 L718.5 115.3 L719.4 101.3 L721.1 88.1 L723.7 76.5 L727.3 66.5 L731.8 58.0 L736.9 51.4 L742.6 46.8 L748.9 44.0 L755.5 42.5 L762.3 42.5 L769.4 43.7 L776.5 45.6 L783.6 47.9 L790.8 50.8 L797.8 53.9 L804.6 57.0 L811.3 60.3 L817.9 63.7 L824.4 67.3 L830.8 71.0 L837.2 74.9 L843.6 78.8 L850.0 82.9 L856.3 87.1 L862.6 91.3 L868.8 95.7 L875.1 100.1 L881.4 104.5 L887.6 109.1 L893.9 113.7 L900.2 118.3 L906.5 123.0 L912.7 127.7 L919.0 132.4 L925.2 137.1 L931.5 141.9 L937.7 146.6 L943.9 151.3 L950.1 156.0 L956.2 160.8 L962.3 165.4 L968.4 170.1 L974.3 174.7 L980.3 179.3 L986.1 183.8 L991.9 188.2 L997.5 192.6 L1003.1 196.9 L1008.6 201.0 L1013.9 205.1 L1019.1 209.1 L1024.1 213.0 L1029.0 216.8 L1033.7 220.4 L1038.1 223.8 L1042.3 227.1 L1046.4 230.2 L1050.3 233.2 L1054.0 236.0 L1057.5 238.8 L1060.8 241.3 L1063.9 243.6 L1066.8 245.8 L1069.5 247.9 L1072.0 249.8 L1074.3 251.6 L1076.5 253.3 L1078.4 254.9 L1080.3 256.3 L1082.0 257.6 L1083.6 258.8 L1085.1 259.9 L1086.5 261.0 L1087.7 262.0 L1088.9 262.9 L1090.1 263.8 L1091.1 264.6 L1092.1 265.4 L1093.1 266.1 L1094.0 266.8 L1094.8 267.4 L1095.5 268.0 L1096.2 268.5 L1096.9 269.0 L1097.4 269.4 L1097.9 269.8 L1098.5 270.2 L1099.1 270.7 L1099.8 271.3 L1100.6 271.9 L1101.5 272.6 L1102.4 273.3 L1103.0 273.8Z"/></clipPath><clipPath id="tric"><path d="M1053.2 247.5 L874.3 137.6 L795.3 357.3Z"/></clipPath><radialGradient id="odk" gradientUnits="userSpaceOnUse" cx="907.6" cy="247.5" r="330"><stop offset="0.25" stop-color="#000" stop-opacity="0"/><stop offset="1" stop-color="#000" stop-opacity="0.3"/></radialGradient><radialGradient id="rdk" gradientUnits="userSpaceOnUse" cx="1084.8" cy="263.7" r="150"><stop offset="0" stop-color="#000" stop-opacity="0.36"/><stop offset="1" stop-color="#000" stop-opacity="0"/></radialGradient><clipPath id="insc"><rect x="1025.3" y="43.3" width="129.29999999999995" height="100.89999999999999"/></clipPath><linearGradient id="insL" x1="0" y1="0" x2="0.12" y2="1"><stop offset="0" stop-color="#007e98"/><stop offset="1" stop-color="#004a96"/></linearGradient><linearGradient id="insR" gradientUnits="userSpaceOnUse" x1="1107.3" y1="43.3" x2="1072.8" y2="144.2"><stop offset="0" stop-color="#0adeff"/><stop offset="1" stop-color="#0084ff"/></linearGradient><linearGradient id="insR2" gradientUnits="userSpaceOnUse" x1="1090" y1="93.5" x2="1159.7" y2="137"><stop offset="0" stop-color="#ff46ff" stop-opacity="0"/><stop offset="1" stop-color="#ff46ff" stop-opacity="0.37"/></linearGradient></defs>
<g clip-path="url(#locc)">
<path d="M700 30H1165V390H700Z M1053.2 247.5 L874.3 137.6 L795.3 357.3Z" fill="#000" fill-opacity="0.38" fill-rule="evenodd"/>
<path d="M700 30H1165V390H700Z M1053.2 247.5 L874.3 137.6 L795.3 357.3Z" fill="url(#odk)" fill-rule="evenodd"/>
</g>
<g clip-path="url(#tric)">
<path d="M1045.1 247.5 L936.1 177.4 L874.4 140.5 L835.2 248.0 L797.6 354.5 L885.2 317.8Z" fill="#fff" fill-opacity="0.0158"/>
<path d="M1030.5 247.5 L934.2 179.8 L874.8 146.0 L836.4 248.0 L801.8 349.0 L885.1 315.4Z" fill="#fff" fill-opacity="0.0275"/>
<path d="M1017.8 247.5 L932.4 182.1 L875.1 151.2 L837.6 248.0 L805.8 343.9 L884.9 313.1Z" fill="#fff" fill-opacity="0.0264"/>
<path d="M1006.6 247.6 L930.6 184.4 L875.4 156.0 L838.8 248.0 L809.5 339.1 L884.8 310.8Z" fill="#fff" fill-opacity="0.0262"/>
<path d="M996.7 247.6 L928.9 186.6 L875.7 160.6 L840.0 247.9 L813.1 334.6 L884.7 308.6Z" fill="#fff" fill-opacity="0.0262"/>
<path d="M987.9 247.6 L927.2 188.8 L875.9 165.0 L841.2 247.9 L816.4 330.3 L884.5 306.5Z" fill="#fff" fill-opacity="0.0263"/>
<path d="M980.0 247.6 L925.5 190.9 L876.2 169.1 L842.3 247.9 L819.6 326.3 L884.4 304.4Z" fill="#fff" fill-opacity="0.0266"/>
<path d="M972.9 247.6 L923.9 193.0 L876.4 173.0 L843.4 247.9 L822.6 322.4 L884.3 302.4Z" fill="#fff" fill-opacity="0.0269"/>
<path d="M966.4 247.7 L922.3 195.0 L876.6 176.7 L844.6 247.9 L825.5 318.7 L884.2 300.4Z" fill="#fff" fill-opacity="0.0274"/>
<path d="M960.6 247.7 L920.8 197.0 L876.9 180.2 L845.7 247.9 L828.2 315.3 L884.0 298.4Z" fill="#fff" fill-opacity="0.0278"/>
<path d="M955.2 247.7 L919.3 198.9 L877.1 183.6 L846.8 247.9 L830.8 311.9 L883.9 296.5Z" fill="#fff" fill-opacity="0.0283"/>
<path d="M950.2 247.7 L917.8 200.7 L877.3 186.7 L847.9 247.9 L833.3 308.8 L883.8 294.7Z" fill="#fff" fill-opacity="0.0289"/>
<path d="M945.7 247.7 L916.4 202.6 L877.4 189.8 L848.9 247.9 L835.7 305.8 L883.7 292.9Z" fill="#fff" fill-opacity="0.0295"/>
<path d="M941.5 247.7 L915.0 204.3 L877.6 192.7 L850.0 247.9 L837.9 302.9 L883.6 291.1Z" fill="#fff" fill-opacity="0.0302"/>
<path d="M937.6 247.7 L913.7 206.1 L877.8 195.5 L851.1 247.9 L840.1 300.1 L883.5 289.4Z" fill="#fff" fill-opacity="0.0310"/>
<path d="M934.0 247.7 L912.3 207.8 L877.9 198.1 L852.1 247.9 L842.1 297.5 L883.4 287.7Z" fill="#fff" fill-opacity="0.0317"/>
<path d="M930.6 247.7 L911.0 209.5 L878.1 200.7 L853.1 247.9 L844.1 294.9 L883.3 286.1Z" fill="#fff" fill-opacity="0.0326"/>
<path d="M927.4 247.8 L909.7 211.1 L878.2 203.1 L854.2 247.9 L846.0 292.5 L883.2 284.4Z" fill="#fff" fill-opacity="0.0335"/>
<path d="M924.5 247.8 L908.5 212.7 L878.4 205.5 L855.2 247.9 L847.8 290.2 L883.1 282.9Z" fill="#fff" fill-opacity="0.0345"/>
<path d="M921.7 247.8 L907.3 214.2 L878.5 207.7 L856.2 247.9 L849.6 288.0 L883.0 281.3Z" fill="#fff" fill-opacity="0.0355"/>
<path d="M919.1 247.8 L906.1 215.8 L878.7 209.9 L857.2 247.9 L851.3 285.8 L882.9 279.8Z" fill="#fff" fill-opacity="0.0367"/>
<path d="M916.7 247.8 L904.9 217.3 L878.8 211.9 L858.1 247.9 L852.9 283.7 L882.8 278.3Z" fill="#fff" fill-opacity="0.0379"/>
<path d="M914.3 247.8 L903.8 218.7 L878.9 214.0 L859.1 247.9 L854.5 281.7 L882.7 276.9Z" fill="#fff" fill-opacity="0.0392"/>
<path d="M912.1 247.8 L902.6 220.1 L879.0 215.9 L860.1 247.9 L856.0 279.8 L882.6 275.4Z" fill="#fff" fill-opacity="0.0407"/>
<path d="M910.1 247.8 L901.6 221.6 L879.1 217.7 L861.0 247.9 L857.4 278.0 L882.6 274.0Z" fill="#fff" fill-opacity="0.0422"/>
<path d="M908.1 247.8 L900.5 222.9 L879.2 219.5 L862.0 247.9 L858.8 276.2 L882.5 272.7Z" fill="#fff" fill-opacity="0.0439"/>
<path d="M906.2 247.8 L899.4 224.3 L879.3 221.3 L862.9 247.9 L860.2 274.4 L882.4 271.3Z" fill="#fff" fill-opacity="0.0458"/>
<path d="M904.5 247.8 L898.4 225.6 L879.4 222.9 L863.8 247.9 L861.5 272.8 L882.3 270.0Z" fill="#fff" fill-opacity="0.0478"/>
<path d="M902.8 247.8 L897.4 226.9 L879.5 224.5 L864.7 247.9 L862.7 271.2 L882.2 268.7Z" fill="#fff" fill-opacity="0.0501"/>
<path d="M901.2 247.8 L896.4 228.2 L879.6 226.1 L865.6 247.9 L863.9 269.6 L882.2 267.5Z" fill="#fff" fill-opacity="0.0525"/>
<path d="M899.6 247.8 L895.4 229.4 L879.7 227.6 L866.5 247.9 L865.1 268.1 L882.1 266.2Z" fill="#fff" fill-opacity="0.0553"/>
<path d="M898.2 247.8 L894.5 230.6 L879.8 229.1 L867.4 247.9 L866.3 266.6 L882.0 265.0Z" fill="#fff" fill-opacity="0.0583"/>
<path d="M896.8 247.8 L893.5 231.8 L879.9 230.5 L868.3 247.9 L867.4 265.2 L881.9 263.8Z" fill="#fff" fill-opacity="0.0618"/>
<path d="M895.4 247.8 L892.6 233.0 L880.0 231.9 L869.2 247.9 L868.4 263.9 L881.9 262.7Z" fill="#fff" fill-opacity="0.0657"/>
<path d="M894.2 247.8 L891.7 234.1 L880.1 233.2 L870.0 247.9 L869.5 262.5 L881.8 261.5Z" fill="#fff" fill-opacity="0.0701"/>
<path d="M892.9 247.8 L890.8 235.3 L880.1 234.5 L870.9 247.9 L870.5 261.2 L881.7 260.4Z" fill="#fff" fill-opacity="0.0752"/>
<path d="M891.8 247.8 L889.9 236.4 L880.2 235.7 L871.8 247.9 L871.5 260.0 L881.7 259.3Z" fill="#fff" fill-opacity="0.0811"/>
<path d="M890.6 247.8 L889.1 237.5 L880.3 237.0 L872.6 247.9 L872.4 258.8 L881.6 258.2Z" fill="#fff" fill-opacity="0.0880"/>
<path d="M889.5 247.8 L888.2 238.6 L880.4 238.1 L873.4 247.9 L873.4 257.6 L881.5 257.1Z" fill="#fff" fill-opacity="0.0962"/>
<path d="M888.5 247.8 L887.4 239.6 L880.4 239.3 L874.3 247.9 L874.3 256.4 L881.5 256.1Z" fill="#fff" fill-opacity="0.1062"/>
<path d="M887.5 247.8 L886.6 240.6 L880.5 240.4 L875.1 247.9 L875.1 255.3 L881.4 255.0Z" fill="#fff" fill-opacity="0.1186"/>
<path d="M886.5 247.8 L885.8 241.7 L880.6 241.5 L875.9 247.9 L876.0 254.2 L881.3 254.0Z" fill="#fff" fill-opacity="0.1342"/>
<path d="M885.6 247.9 L885.0 242.7 L880.6 242.5 L876.7 247.9 L876.8 253.2 L881.3 253.0Z" fill="#fff" fill-opacity="0.1547"/>
<path d="M884.7 247.9 L884.3 243.6 L880.7 243.6 L877.5 247.9 L877.6 252.2 L881.2 252.1Z" fill="#fff" fill-opacity="0.1827"/>
<path d="M883.8 247.9 L883.5 244.6 L880.8 244.6 L878.3 247.9 L878.4 251.1 L881.2 251.1Z" fill="#fff" fill-opacity="0.2230"/>
<path d="M882.9 247.9 L882.8 245.5 L880.8 245.5 L879.0 247.9 L879.1 250.2 L881.1 250.2Z" fill="#fff" fill-opacity="0.2864"/>
<path d="M882.1 247.9 L882.0 246.5 L880.9 246.5 L879.8 247.9 L879.9 249.2 L881.0 249.2Z" fill="#fff" fill-opacity="0.4006"/>
<path d="M881.3 247.9 L881.3 247.4 L880.9 247.4 L880.6 247.9 L880.6 248.3 L881.0 248.3Z" fill="#fff" fill-opacity="0.6670"/>
</g>
<g clip-path="url(#locc)"><rect x="700" y="30" width="470" height="360" fill="url(#rdk)"/></g>
<rect x="716.4" y="38.4" width="442.1" height="343.20000000000005" fill="none" stroke="#a8a8a8" stroke-width="1.2"/>
<rect x="875.5" y="241.5" width="11" height="11" fill="none" stroke="#000" stroke-width="1.25"/>
<rect x="921.5" y="227.5" width="11" height="11" fill="none" stroke="#fff" stroke-width="1.25"/>
<rect x="910.5" y="230.5" width="11" height="11" fill="none" stroke="#fff" stroke-width="1.25"/>
<rect x="842.5" y="267.5" width="11" height="11" fill="none" stroke="#fff" stroke-width="1.25"/>
<rect x="889.5" y="201.5" width="11" height="11" fill="none" stroke="#fff" stroke-width="1.25"/>
<rect x="851.5" y="272.5" width="11" height="11" fill="none" stroke="#fff" stroke-width="1.25"/>
<rect x="849.5" y="228.5" width="11" height="11" fill="none" stroke="#fff" stroke-width="1.25"/>
<rect x="980.5" y="210.5" width="11" height="11" fill="none" stroke="#fff" stroke-width="1.25"/>
<rect x="824.5" y="297.5" width="11" height="11" fill="none" stroke="#fff" stroke-width="1.25"/>
<rect x="953.5" y="248.5" width="11" height="11" fill="none" stroke="#fff" stroke-width="1.25"/>
<rect x="863.5" y="285.5" width="11" height="11" fill="none" stroke="#fff" stroke-width="1.25"/>
<rect x="908.5" y="175.5" width="11" height="11" fill="none" stroke="#fff" stroke-width="1.25"/>
<rect x="960.5" y="197.5" width="11" height="11" fill="none" stroke="#fff" stroke-width="1.25"/>
<rect x="811.5" y="318.5" width="11" height="11" fill="none" stroke="#fff" stroke-width="1.25"/>
<rect x="871.5" y="176.5" width="11" height="11" fill="none" stroke="#fff" stroke-width="1.25"/>
<rect x="993.5" y="246.5" width="11" height="11" fill="none" stroke="#fff" stroke-width="1.25"/>
<rect x="945.5" y="182.5" width="11" height="11" fill="none" stroke="#fff" stroke-width="1.25"/>
<rect x="907.5" y="275.5" width="11" height="11" fill="none" stroke="#fff" stroke-width="1.25"/>
<rect x="820.5" y="265.5" width="11" height="11" fill="none" stroke="#fff" stroke-width="1.25"/>
<circle cx="876.4" cy="245.4" r="3.5" fill="#fcfcfc" stroke="#0a0a12" stroke-opacity="0.9" stroke-width="1"/>
<circle cx="868.0" cy="253.6" r="3.5" fill="#e6e6e6" stroke="#0a0a12" stroke-opacity="0.9" stroke-width="1"/>
<circle cx="863.8" cy="257.6" r="3.5" fill="#d0d0d0" stroke="#0a0a12" stroke-opacity="0.9" stroke-width="1"/>
<circle cx="861.1" cy="260.9" r="3.5" fill="#b9b9b9" stroke="#0a0a12" stroke-opacity="0.9" stroke-width="1"/>
<circle cx="858.5" cy="263.7" r="3.5" fill="#9d9d9d" stroke="#0a0a12" stroke-opacity="0.9" stroke-width="1"/>
<circle cx="860.6" cy="268.6" r="3.5" fill="#000000" stroke="#0a0a12" stroke-opacity="0.9" stroke-width="1"/>
<circle cx="886.4" cy="251.1" r="3.5" fill="#735244" stroke="#0a0a12" stroke-opacity="0.9" stroke-width="1"/>
<circle cx="883.8" cy="252.4" r="3.5" fill="#c29682" stroke="#0a0a12" stroke-opacity="0.9" stroke-width="1"/>
<circle cx="834.8" cy="285.7" r="3.5" fill="#627a9d" stroke="#0a0a12" stroke-opacity="0.9" stroke-width="1"/>
<circle cx="873.8" cy="231.2" r="3.5" fill="#576c43" stroke="#0a0a12" stroke-opacity="0.9" stroke-width="1"/>
<circle cx="839.0" cy="288.1" r="3.5" fill="#8580b1" stroke="#0a0a12" stroke-opacity="0.9" stroke-width="1"/>
<circle cx="847.5" cy="253.2" r="3.5" fill="#67bdaa" stroke="#0a0a12" stroke-opacity="0.9" stroke-width="1"/>
<circle cx="950.6" cy="219.8" r="3.5" fill="#d67e2c" stroke="#0a0a12" stroke-opacity="0.9" stroke-width="1"/>
<circle cx="821.7" cy="306.5" r="3.5" fill="#505ba6" stroke="#0a0a12" stroke-opacity="0.9" stroke-width="1"/>
<circle cx="906.9" cy="266.2" r="3.5" fill="#c15a63" stroke="#0a0a12" stroke-opacity="0.9" stroke-width="1"/>
<circle cx="840.1" cy="301.6" r="3.5" fill="#5e3c6c" stroke="#0a0a12" stroke-opacity="0.9" stroke-width="1"/>
<circle cx="899.0" cy="196.6" r="3.5" fill="#9dbc40" stroke="#0a0a12" stroke-opacity="0.9" stroke-width="1"/>
<circle cx="939.0" cy="208.0" r="3.5" fill="#e0a32e" stroke="#0a0a12" stroke-opacity="0.9" stroke-width="1"/>
<circle cx="812.2" cy="321.5" r="3.5" fill="#383d96" stroke="#0a0a12" stroke-opacity="0.9" stroke-width="1"/>
<circle cx="870.1" cy="208.8" r="3.5" fill="#469449" stroke="#0a0a12" stroke-opacity="0.9" stroke-width="1"/>
<circle cx="939.6" cy="262.1" r="3.5" fill="#af363c" stroke="#0a0a12" stroke-opacity="0.9" stroke-width="1"/>
<circle cx="934.3" cy="193.0" r="3.5" fill="#e7c71f" stroke="#0a0a12" stroke-opacity="0.9" stroke-width="1"/>
<circle cx="870.1" cy="290.2" r="3.5" fill="#bb5695" stroke="#0a0a12" stroke-opacity="0.9" stroke-width="1"/>
<circle cx="824.3" cy="284.5" r="3.5" fill="#0085a3" stroke="#0a0a12" stroke-opacity="0.9" stroke-width="1"/>
<g clip-path="url(#insc)"><rect x="1025.3" y="43.3" width="129.29999999999995" height="100.89999999999999" fill="url(#insL)"/>
<path d="M1107.3 43.3 L1155.6 43.3 L1155.6 144.2 L1072.8 144.2Z" fill="url(#insR)"/>
<path d="M1107.3 43.3 L1155.6 43.3 L1155.6 144.2 L1072.8 144.2Z" fill="url(#insR2)"/>
<circle cx="1085.9" cy="137.5" r="3.6" fill="#008296" stroke="#012" stroke-width="1"/>
<circle cx="1119.5" cy="141.2" r="3.6" fill="#6482b4" stroke="#012" stroke-width="1"/>
</g>
<rect x="1084.2" y="88.0" width="11.4" height="10.6" fill="none" stroke="#fff" stroke-width="1.1"/>
<rect x="1024.8" y="42.8" width="130.29999999999995" height="101.89999999999999" fill="none" stroke="#a0a0a0" stroke-width="1.2"/>
<rect x="967" y="354" width="190.5" height="19" fill="#343434"/>
<text x="1061.50" y="368.80" font-size="14.5" fill="#f0f0f0" text-anchor="middle" font-weight="normal" textLength="148" lengthAdjust="spacingAndGlyphs">RGB Triplet: 0, 133, 163</text>
</svg>
</div></body></html>
